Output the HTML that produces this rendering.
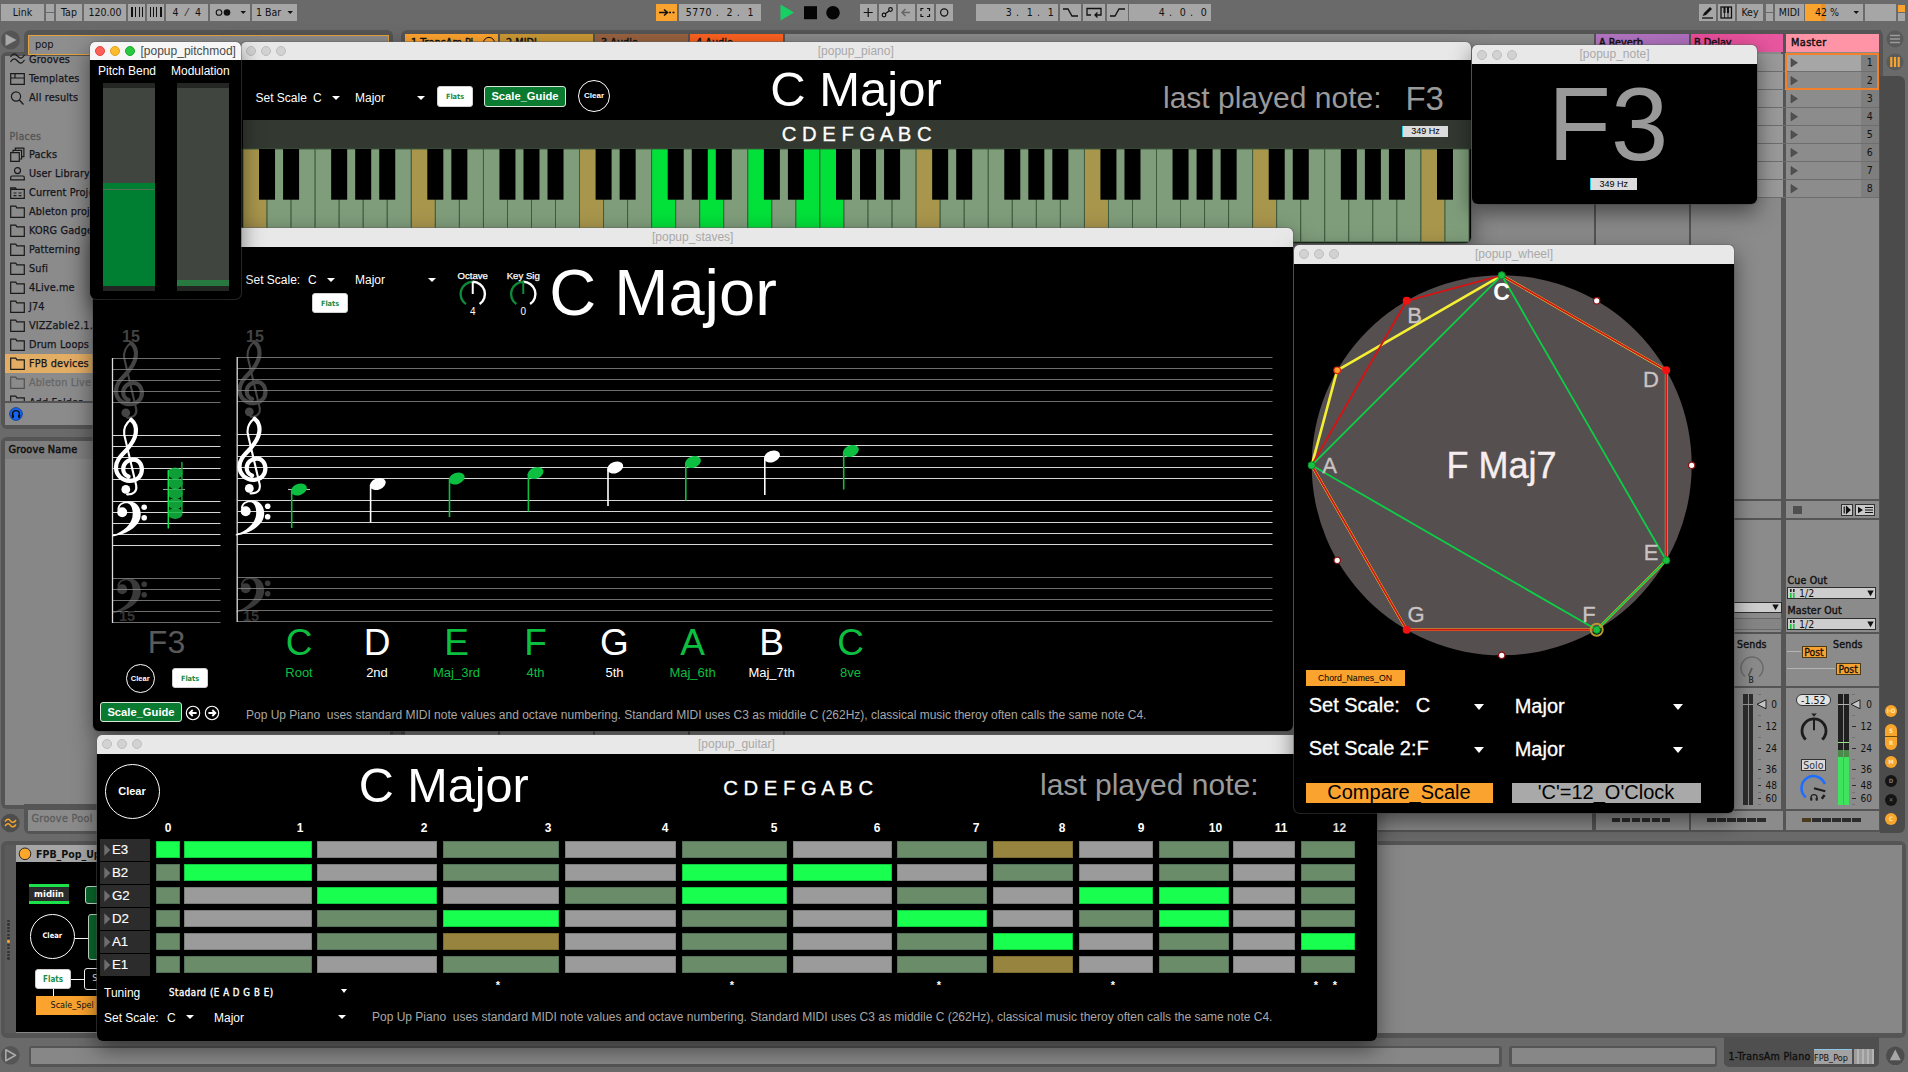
<!DOCTYPE html><html><head><meta charset="utf-8"><title>popup</title><style>
html,body{margin:0;padding:0;}
body{width:1908px;height:1072px;overflow:hidden;background:#6a6a6a;font-family:"Liberation Sans",sans-serif;position:relative;}
div,span{position:absolute;box-sizing:border-box;white-space:nowrap;}
svg{position:absolute;overflow:visible;}
.ab{font-family:"DejaVu Sans Condensed","DejaVu Sans","Liberation Sans",sans-serif;color:#111;}
.win{background:#000;border-radius:5px 5px 6px 6px;box-shadow:0 8px 22px rgba(0,0,0,.5),0 0 0 1px rgba(110,110,110,.45);overflow:hidden;}
.tb{left:0;top:0;right:0;background:#e8e8e8;color:#a9a9a9;font-size:12px;text-align:center;}
.tl{width:10px;height:10px;border-radius:50%;background:#d2d2d2;border:0.5px solid #bdbdbd;}
.w{color:#fff;}
.arr{width:0;height:0;border-left:4px solid transparent;border-right:4px solid transparent;border-top:4.5px solid #fff;}
.flats{background:#fff;border:1px solid #cfcfcf;border-radius:3px;color:#1c8a43;font-size:7.3px;font-weight:bold;text-align:center;font-family:"DejaVu Sans Condensed","DejaVu Sans",sans-serif;}
.sg{background:#0b7a31;border:1px solid #d8e8dc;border-radius:3px;color:#fff;font-weight:bold;font-size:11.2px;text-align:center;}
.clr{border:1px solid #fff;border-radius:50%;color:#fff;text-align:center;font-weight:bold;}
.hz{background:#dcdcdc;border-left:1.5px solid #2ec8e8;color:#000;font-size:9px;text-align:center;}
</style></head><body>
<div class="ab" style="left:1px;top:4px;width:43px;height:17px;background:#a6a6a6;text-align:center;line-height:17px;font-size:10.5px;">Link</div>
<div class="ab" style="left:46px;top:4px;width:8px;height:17px;background:#a6a6a6;text-align:center;line-height:17px;font-size:10.5px;"></div>
<div style="left:46px;top:12px;width:8px;height:1px;background:#6a6a6a;"></div>
<div class="ab" style="left:56px;top:4px;width:26px;height:17px;background:#a6a6a6;text-align:center;line-height:17px;font-size:10.5px;">Tap</div>
<div class="ab" style="left:84px;top:4px;width:42px;height:17px;background:#a6a6a6;text-align:center;line-height:17px;font-size:10.5px;">120.00</div>
<div class="ab" style="left:128px;top:4px;width:17px;height:17px;background:#a6a6a6;text-align:center;line-height:17px;font-size:10.5px;"></div>
<div class="ab" style="left:147px;top:4px;width:17px;height:17px;background:#a6a6a6;text-align:center;line-height:17px;font-size:10.5px;"></div>
<div style="left:131px;top:7px;width:2.2px;height:10px;background:#111;"></div>
<div style="left:135.4px;top:7px;width:1px;height:10px;background:#111;"></div>
<div style="left:138.6px;top:7px;width:1px;height:10px;background:#111;"></div>
<div style="left:141.79999999999998px;top:7px;width:1px;height:10px;background:#111;"></div>
<div style="left:150px;top:7px;width:1px;height:10px;background:#111;"></div>
<div style="left:153.2px;top:7px;width:1px;height:10px;background:#111;"></div>
<div style="left:156.39999999999998px;top:7px;width:1px;height:10px;background:#111;"></div>
<div style="left:159.59999999999997px;top:7px;width:2.2px;height:10px;background:#111;"></div>
<div class="ab" style="left:166px;top:4px;width:42px;height:17px;background:#a6a6a6;text-align:center;line-height:17px;font-size:10.5px;letter-spacing:0.5px;">4&nbsp; &#8260; &nbsp;4</div>
<div class="ab" style="left:210px;top:4px;width:40px;height:17px;background:#a6a6a6;text-align:center;line-height:17px;font-size:10.5px;"></div>
<div class="ab" style="left:252px;top:4px;width:45px;height:17px;background:#a6a6a6;text-align:center;line-height:17px;font-size:10.5px;">1 Bar&nbsp;&nbsp;&nbsp;&nbsp;</div>
<svg width="40" height="17" style="left:210px;top:4px"><circle cx="9" cy="8.5" r="2.8" fill="none" stroke="#111" stroke-width="1.1"/><circle cx="17" cy="8.5" r="3.3" fill="#111"/><path d="M30.5,7 L36,7 L33.2,10 Z" fill="#111"/></svg>
<svg width="10" height="17" style="left:286px;top:4px"><path d="M1.5,7 L7,7 L4.2,10 Z" fill="#111"/></svg>
<div class="ab" style="left:656px;top:4px;width:21px;height:17px;background:#fba32f;text-align:center;line-height:17px;font-size:10.5px;"></div>
<svg width="21" height="17" style="left:656px;top:4px"><path d="M3,8.5 L11,8.5 M8,5.5 L11.5,8.5 L8,11.5" fill="none" stroke="#111" stroke-width="1.6"/><path d="M13,8.5 h2 M16.5,8.5 h2" stroke="#111" stroke-width="1.6"/></svg>
<div class="ab" style="left:679px;top:4px;width:82px;height:17px;background:#a6a6a6;text-align:center;line-height:17px;font-size:10.5px;letter-spacing:0.6px;">5770 .&nbsp; 2 .&nbsp; 1</div>
<svg width="70" height="21" style="left:778px;top:2px"><path d="M2.5,2.5 L16,10.5 L2.5,18.5 Z" fill="#17d064"/><rect x="26" y="4.2" width="13" height="13" fill="#050505"/><circle cx="55" cy="10.7" r="6.8" fill="#050505"/></svg>
<div class="ab" style="left:860px;top:4px;width:16.5px;height:17px;background:#a6a6a6;text-align:center;line-height:17px;font-size:10.5px;"></div>
<div class="ab" style="left:879px;top:4px;width:16.5px;height:17px;background:#a6a6a6;text-align:center;line-height:17px;font-size:10.5px;"></div>
<div class="ab" style="left:898px;top:4px;width:16.5px;height:17px;background:#a6a6a6;text-align:center;line-height:17px;font-size:10.5px;"></div>
<div class="ab" style="left:917px;top:4px;width:16.5px;height:17px;background:#a6a6a6;text-align:center;line-height:17px;font-size:10.5px;"></div>
<div class="ab" style="left:936px;top:4px;width:16.5px;height:17px;background:#a6a6a6;text-align:center;line-height:17px;font-size:10.5px;"></div>
<svg width="100" height="17" style="left:860px;top:4px" fill="none" stroke="#111" stroke-width="1.2"><path d="M8.2,4 V13 M3.7,8.5 H12.7"/><circle cx="24" cy="11" r="1.8"/><circle cx="30.5" cy="5.5" r="1.8"/><path d="M25.3,9.8 L29.2,6.7"/><path d="M42,8.5 H50 M45.5,5 L42,8.5 L45.5,12" stroke="#666" stroke-width="1.5"/><path d="M61,7 V4.5 H63.5 M67,4.5 H69.5 V7 M69.5,10 V12.5 H67 M63.5,12.5 H61 V10"/><circle cx="84.2" cy="8.5" r="3.6"/></svg>
<div class="ab" style="left:976px;top:4px;width:82px;height:17px;background:#a6a6a6;text-align:center;line-height:17px;font-size:10.5px;letter-spacing:0.6px;text-align:right;">3 .&nbsp; 1 .&nbsp; 1&nbsp;</div>
<div class="ab" style="left:1060px;top:4px;width:21px;height:17px;background:#a6a6a6;text-align:center;line-height:17px;font-size:10.5px;"></div>
<div class="ab" style="left:1083px;top:4px;width:21.5px;height:17px;background:#a6a6a6;text-align:center;line-height:17px;font-size:10.5px;"></div>
<div class="ab" style="left:1107px;top:4px;width:20.5px;height:17px;background:#a6a6a6;text-align:center;line-height:17px;font-size:10.5px;"></div>
<svg width="70" height="17" style="left:1060px;top:4px" fill="none" stroke="#111" stroke-width="1.3"><path d="M3,5 H8 L12,12 H18"/><path d="M31,11 H27 V4.5 H41 V11 H35 M37.5,8.5 L35,11 L37.5,13.5"/><path d="M50,12 H55 L59,5 H65"/></svg>
<div class="ab" style="left:1129px;top:4px;width:82px;height:17px;background:#a6a6a6;text-align:center;line-height:17px;font-size:10.5px;letter-spacing:0.6px;text-align:right;">4 .&nbsp; 0 .&nbsp; 0&nbsp;</div>
<div class="ab" style="left:1699px;top:4px;width:16.5px;height:17px;background:#a6a6a6;text-align:center;line-height:17px;font-size:10.5px;"></div>
<div class="ab" style="left:1718px;top:4px;width:17px;height:17px;background:#a6a6a6;text-align:center;line-height:17px;font-size:10.5px;"></div>
<div class="ab" style="left:1737px;top:4px;width:26px;height:17px;background:#a6a6a6;text-align:center;line-height:17px;font-size:10.5px;">Key</div>
<div class="ab" style="left:1765.5px;top:4px;width:7.5px;height:17px;background:#a6a6a6;text-align:center;line-height:17px;font-size:10.5px;"></div>
<div style="left:1765.5px;top:12px;width:7.5px;height:1px;background:#6a6a6a;"></div>
<div class="ab" style="left:1775px;top:4px;width:28.5px;height:17px;background:#a6a6a6;text-align:center;line-height:17px;font-size:10.5px;">MIDI</div>
<div class="ab" style="left:1805px;top:4px;width:58px;height:17px;background:#a6a6a6;text-align:center;line-height:17px;font-size:10.5px;"></div>
<div style="left:1805px;top:4px;width:20px;height:17px;background:#fba32f;"></div>
<div style="left:1821px;top:4px;width:4px;height:17px;background:#e8902a;"></div>
<span class="ab" style="left:1815px;top:6px;font-size:10.5px;line-height:12.5px;color:#111;">42 %</span>
<svg width="10" height="17" style="left:1852px;top:4px"><path d="M1.5,7 L7,7 L4.2,10 Z" fill="#111"/></svg>
<div class="ab" style="left:1865px;top:4px;width:30.5px;height:17px;background:#a6a6a6;text-align:center;line-height:17px;font-size:10.5px;"></div>
<div style="left:1897.5px;top:5px;width:7.5px;height:6.5px;background:#fba32f;"></div>
<div style="left:1897.5px;top:13px;width:7.5px;height:8px;background:#a6a6a6;"></div>
<svg width="40" height="17" style="left:1699px;top:4px"><path d="M3.5,12 L5,9 L11,3 L13,5 L7,11 Z" fill="#111"/><path d="M3,14 H14" stroke="#111" stroke-width="1.3"/><rect x="22" y="3" width="10.5" height="11" fill="none" stroke="#111" stroke-width="1.3"/><path d="M25.5,3 V9 M29,3 V9" stroke="#111" stroke-width="2"/><path d="M25.5,9 V14 M29,9 V14" stroke="#111" stroke-width="0.8"/></svg>
<div style="left:24px;top:30px;width:369px;height:30px;background:#555;border-radius:6px 6px 0 0;"></div>
<div style="left:1px;top:52px;width:392px;height:377px;background:#555;border-radius:6px;"></div>
<div style="left:5px;top:56px;width:385px;height:345px;background:#8b8b8b;"></div>
<div style="left:5px;top:402.5px;width:385px;height:22px;background:#8b8b8b;"></div>
<svg width="22" height="22" style="left:0px;top:30px"><circle cx="10.5" cy="10" r="9.5" fill="#555"/><path d="M5.5,4 L16.5,10 L5.5,16 Z" fill="#a8a8a8"/></svg>
<div style="left:28px;top:34.5px;width:361px;height:20px;background:#8e8e8e;border:1.5px solid #e5a340;"></div>
<span class="ab" style="left:35px;top:38px;font-size:11px;line-height:13px;color:#111;">pop</span>
<div style="left:5px;top:354px;width:385px;height:19px;background:#e3ad64;"></div>
<span class="ab" style="left:9.5px;top:129.5px;font-size:10.5px;line-height:12.5px;color:#555;-webkit-text-stroke:0.35px #555;letter-spacing:0.3px;">Places</span>
<svg width="15" height="15" style="left:10px;top:51.5px;opacity:1"><path d="M0.5,5 C3,1 5,1 7.5,4 C10,7 12,7 14.5,3 M0.5,10 C3,6 5,6 7.5,9 C10,12 12,12 14.5,8" fill="none" stroke="#1a1a1a" stroke-width="1.2"/></svg>
<span class="ab" style="left:29px;top:54.0px;font-size:10.8px;line-height:12.8px;color:#15151c;letter-spacing:0.15px;-webkit-text-stroke:0.25px #15151c;">Grooves</span>
<svg width="15" height="15" style="left:10px;top:70.5px;opacity:1"><path d="M0.7,2.7 H14.3 V13.3 H0.7 Z M0.7,7 H14.3 M5,2.7 V7" fill="none" stroke="#1a1a1a" stroke-width="1.2"/></svg>
<span class="ab" style="left:29px;top:73.0px;font-size:10.8px;line-height:12.8px;color:#15151c;letter-spacing:0.15px;-webkit-text-stroke:0.25px #15151c;">Templates</span>
<svg width="15" height="15" style="left:10px;top:89.5px;opacity:1"><circle cx="6" cy="6.5" r="4.6" fill="none" stroke="#1a1a1a" stroke-width="1.2"/><path d="M9.3,10 L13.5,14.5" stroke="#1a1a1a" stroke-width="1.3"/></svg>
<span class="ab" style="left:29px;top:92.0px;font-size:10.8px;line-height:12.8px;color:#15151c;letter-spacing:0.15px;-webkit-text-stroke:0.25px #15151c;">All results</span>
<svg width="15" height="15" style="left:10px;top:146.5px;opacity:1"><path d="M0.7,5.7 H9.3 V14.3 H0.7 Z M3,5.5 V3.4 H11.6 V12 H9.5 M5.3,3.2 V1.1 H13.9 V9.7 H11.8" fill="none" stroke="#1a1a1a" stroke-width="1.2"/></svg>
<span class="ab" style="left:29px;top:149.0px;font-size:10.8px;line-height:12.8px;color:#15151c;letter-spacing:0.15px;-webkit-text-stroke:0.25px #15151c;">Packs</span>
<svg width="15" height="15" style="left:10px;top:165.5px;opacity:1"><circle cx="7.5" cy="4.6" r="3" fill="none" stroke="#1a1a1a" stroke-width="1.2"/><path d="M0.7,13.8 V11.5 Q0.7,10 2.2,10 H12.8 Q14.3,10 14.3,11.5 V13.8 Z" fill="none" stroke="#1a1a1a" stroke-width="1.2"/></svg>
<span class="ab" style="left:29px;top:168.0px;font-size:10.8px;line-height:12.8px;color:#15151c;letter-spacing:0.15px;-webkit-text-stroke:0.25px #15151c;">User Library</span>
<svg width="15" height="15" style="left:10px;top:184.5px;opacity:1"><path d="M0.7,2.8 H5.5 L6.5,4.4 H14.3 V13.3 H0.7 Z M0.7,4.4 H6.5 M3.5,8 H6.5 M8.5,8 H11.5 M3.5,10.7 H6.5 M8.5,10.7 H11.5" fill="none" stroke="#1a1a1a" stroke-width="1.2"/></svg>
<span class="ab" style="left:29px;top:187.0px;font-size:10.8px;line-height:12.8px;color:#15151c;letter-spacing:0.15px;-webkit-text-stroke:0.25px #15151c;">Current Project</span>
<svg width="15" height="15" style="left:10px;top:203.5px;opacity:1"><path d="M0.7,13.4 V2.2 H5.8 L6.8,3.8 H14.3 V13.4 Z" fill="none" stroke="#1a1a1a" stroke-width="1.2"/></svg>
<span class="ab" style="left:29px;top:206.0px;font-size:10.8px;line-height:12.8px;color:#15151c;letter-spacing:0.15px;-webkit-text-stroke:0.25px #15151c;">Ableton projects</span>
<svg width="15" height="15" style="left:10px;top:222.5px;opacity:1"><path d="M0.7,13.4 V2.2 H5.8 L6.8,3.8 H14.3 V13.4 Z" fill="none" stroke="#1a1a1a" stroke-width="1.2"/></svg>
<span class="ab" style="left:29px;top:225.0px;font-size:10.8px;line-height:12.8px;color:#15151c;letter-spacing:0.15px;-webkit-text-stroke:0.25px #15151c;">KORG Gadget</span>
<svg width="15" height="15" style="left:10px;top:241.5px;opacity:1"><path d="M0.7,13.4 V2.2 H5.8 L6.8,3.8 H14.3 V13.4 Z" fill="none" stroke="#1a1a1a" stroke-width="1.2"/></svg>
<span class="ab" style="left:29px;top:244.0px;font-size:10.8px;line-height:12.8px;color:#15151c;letter-spacing:0.15px;-webkit-text-stroke:0.25px #15151c;">Patterning</span>
<svg width="15" height="15" style="left:10px;top:260.5px;opacity:1"><path d="M0.7,13.4 V2.2 H5.8 L6.8,3.8 H14.3 V13.4 Z" fill="none" stroke="#1a1a1a" stroke-width="1.2"/></svg>
<span class="ab" style="left:29px;top:263.0px;font-size:10.8px;line-height:12.8px;color:#15151c;letter-spacing:0.15px;-webkit-text-stroke:0.25px #15151c;">Sufi</span>
<svg width="15" height="15" style="left:10px;top:279.5px;opacity:1"><path d="M0.7,13.4 V2.2 H5.8 L6.8,3.8 H14.3 V13.4 Z" fill="none" stroke="#1a1a1a" stroke-width="1.2"/></svg>
<span class="ab" style="left:29px;top:282.0px;font-size:10.8px;line-height:12.8px;color:#15151c;letter-spacing:0.15px;-webkit-text-stroke:0.25px #15151c;">4Live.me</span>
<svg width="15" height="15" style="left:10px;top:298.5px;opacity:1"><path d="M0.7,13.4 V2.2 H5.8 L6.8,3.8 H14.3 V13.4 Z" fill="none" stroke="#1a1a1a" stroke-width="1.2"/></svg>
<span class="ab" style="left:29px;top:301.0px;font-size:10.8px;line-height:12.8px;color:#15151c;letter-spacing:0.15px;-webkit-text-stroke:0.25px #15151c;">J74</span>
<svg width="15" height="15" style="left:10px;top:317.5px;opacity:1"><path d="M0.7,13.4 V2.2 H5.8 L6.8,3.8 H14.3 V13.4 Z" fill="none" stroke="#1a1a1a" stroke-width="1.2"/></svg>
<span class="ab" style="left:29px;top:320.0px;font-size:10.8px;line-height:12.8px;color:#15151c;letter-spacing:0.15px;-webkit-text-stroke:0.25px #15151c;">VIZZable2.1.1</span>
<svg width="15" height="15" style="left:10px;top:336.5px;opacity:1"><path d="M0.7,13.4 V2.2 H5.8 L6.8,3.8 H14.3 V13.4 Z" fill="none" stroke="#1a1a1a" stroke-width="1.2"/></svg>
<span class="ab" style="left:29px;top:339.0px;font-size:10.8px;line-height:12.8px;color:#15151c;letter-spacing:0.15px;-webkit-text-stroke:0.25px #15151c;">Drum Loops</span>
<svg width="15" height="15" style="left:10px;top:355.5px;opacity:1"><path d="M0.7,13.4 V2.2 H5.8 L6.8,3.8 H14.3 V13.4 Z" fill="none" stroke="#1a1a1a" stroke-width="1.2"/></svg>
<span class="ab" style="left:29px;top:358.0px;font-size:10.8px;line-height:12.8px;color:#15151c;letter-spacing:0.15px;-webkit-text-stroke:0.25px #15151c;">FPB devices</span>
<svg width="15" height="15" style="left:10px;top:374.5px;opacity:0.5"><path d="M0.7,13.4 V2.2 H5.8 L6.8,3.8 H14.3 V13.4 Z" fill="none" stroke="#1a1a1a" stroke-width="1.2"/></svg>
<span class="ab" style="left:29px;top:377.0px;font-size:10.8px;line-height:12.8px;color:#666;letter-spacing:0.15px;-webkit-text-stroke:0.25px #666;">Ableton Live suite</span>
<div style="left:5px;top:392px;width:385px;height:9px;overflow:hidden;"><svg width="15" height="15" style="left:5px;top:1.5px"><path d="M0.7,13.4 V2.2 H5.8 L6.8,3.8 H14.3 V13.4 Z" fill="none" stroke="#1a1a1a" stroke-width="1.2"/></svg><span class="ab" style="left:24px;top:3.5px;font-size:10.8px;line-height:13px;color:#15151c;letter-spacing:0.15px;-webkit-text-stroke:0.25px #15151c;">Add Folder</span></div>
<div style="left:5px;top:401px;width:385px;height:1.5px;background:#555;"></div>
<svg width="14" height="14" style="left:8.5px;top:406.5px"><circle cx="7" cy="7" r="6.3" fill="#1466f0" stroke="#0c3f9a" stroke-width="1"/><path d="M3.6,8.5 V7 A3.4,3.4 0 0 1 10.4,7 V8.5" fill="none" stroke="#0a0a14" stroke-width="1.4"/><rect x="2.8" y="7.6" width="2.2" height="3.4" rx="0.8" fill="#0a0a14"/><rect x="9" y="7.6" width="2.2" height="3.4" rx="0.8" fill="#0a0a14"/></svg>
<div style="left:1px;top:436.5px;width:392px;height:372px;background:#555;border-radius:6px;"></div>
<div style="left:5px;top:440.5px;width:385px;height:18.5px;background:#7e7e7e;"></div>
<div style="left:5px;top:459px;width:385px;height:346px;background:#878787;"></div>
<span class="ab" style="left:8.5px;top:443.5px;font-size:10.8px;line-height:12.8px;color:#111;-webkit-text-stroke:0.5px #111;letter-spacing:0.2px;">Groove Name</span>
<div style="left:24px;top:804px;width:369px;height:30px;background:#555;border-radius:0 0 6px 6px;"></div>
<div style="left:27.5px;top:809.5px;width:362px;height:21px;background:#8b8b8b;"></div>
<span class="ab" style="left:31.5px;top:812.5px;font-size:10.8px;line-height:12.8px;color:#5c5c5c;letter-spacing:0.3px;-webkit-text-stroke:0.3px #5c5c5c;">Groove Pool</span>
<svg width="22" height="22" style="left:0px;top:812px"><circle cx="10.3" cy="11" r="9.3" fill="#4d4d4d"/><path d="M5,9.5 C7,6.5 9,6.5 10.5,8.8 C12,11 14,11 16,8 M5,14 C7,11 9,11 10.5,13.3 C12,15.5 14,15.5 16,12.5" fill="none" stroke="#f7a52c" stroke-width="1.5"/></svg>
<div style="left:401px;top:30px;width:1480px;height:802px;background:#555;border-radius:6px 0 0 6px;"></div>
<div style="left:1876px;top:30px;width:7px;height:802px;background:#555;border-radius:0 6px 0 0;"></div>
<div style="left:404.5px;top:34px;width:1376.5px;height:775px;background:#8b8b8b;"></div>
<div style="left:1785.5px;top:34px;width:93px;height:775px;background:#8b8b8b;"></div>
<div style="left:1377px;top:811px;width:215px;height:19px;background:#8b8b8b;"></div>
<div style="left:1595.5px;top:811px;width:93px;height:19px;background:#8b8b8b;"></div>
<div style="left:1690.5px;top:811px;width:93px;height:19px;background:#8b8b8b;"></div>
<div style="left:1785.5px;top:811px;width:93px;height:19px;background:#8b8b8b;"></div>
<div style="left:405px;top:34px;width:93px;height:17.5px;background:#ffa52f;"></div>
<span class="ab" style="left:411px;top:36.5px;font-size:10.8px;line-height:12.8px;color:#111;-webkit-text-stroke:0.45px #111;">1 TransAm Pi</span>
<div style="left:500px;top:34px;width:93px;height:17.5px;background:#cd9b36;"></div>
<span class="ab" style="left:506px;top:36.5px;font-size:10.8px;line-height:12.8px;color:#111;-webkit-text-stroke:0.45px #111;">2 MIDI</span>
<div style="left:595px;top:34px;width:93px;height:17.5px;background:#9a6340;"></div>
<span class="ab" style="left:601px;top:36.5px;font-size:10.8px;line-height:12.8px;color:#111;-webkit-text-stroke:0.45px #111;">3 Audio</span>
<div style="left:690px;top:34px;width:93px;height:17.5px;background:#ff6320;"></div>
<span class="ab" style="left:696px;top:36.5px;font-size:10.8px;line-height:12.8px;color:#111;-webkit-text-stroke:0.45px #111;">4 Audio</span>
<svg width="14" height="14" style="left:482px;top:35.5px"><circle cx="7" cy="7" r="5.6" fill="none" stroke="#111" stroke-width="1"/></svg>
<div style="left:498px;top:34px;width:2px;height:775px;background:#555;"></div>
<div style="left:593px;top:34px;width:2px;height:775px;background:#555;"></div>
<div style="left:688px;top:34px;width:2px;height:775px;background:#555;"></div>
<div style="left:783px;top:34px;width:2px;height:775px;background:#555;"></div>
<div style="left:1593.5px;top:34px;width:2px;height:775px;background:#555;"></div>
<div style="left:1688.5px;top:34px;width:2px;height:775px;background:#555;"></div>
<div style="left:1783px;top:34px;width:2.5px;height:798px;background:#555;"></div>
<div style="left:1595.5px;top:34px;width:93px;height:17.5px;background:linear-gradient(90deg,#b576c4,#ae6fbd);"></div>
<span class="ab" style="left:1599px;top:36.5px;font-size:10.8px;line-height:12.8px;color:#111;-webkit-text-stroke:0.45px #111;">A Reverb</span>
<div style="left:1690.5px;top:34px;width:92.5px;height:17.5px;background:linear-gradient(90deg,#ec4b9b,#e6589f);"></div>
<span class="ab" style="left:1694px;top:36.5px;font-size:10.8px;line-height:12.8px;color:#111;-webkit-text-stroke:0.45px #111;">B Delay</span>
<div style="left:1785.5px;top:34px;width:93px;height:17.5px;background:#ff94a6;"></div>
<span class="ab" style="left:1791px;top:36.5px;font-size:10.8px;line-height:12.8px;color:#111;-webkit-text-stroke:0.45px #111;letter-spacing:0.4px;">Master</span>
<div style="left:1878.5px;top:34px;width:2.5px;height:798px;background:#555;"></div>
<div style="left:1595.5px;top:54px;width:93.0px;height:16.5px;background:#9a9a9a;"></div>
<div style="left:1690.5px;top:54px;width:92.5px;height:16.5px;background:#9a9a9a;"></div>
<div style="left:1785.5px;top:54px;width:75.5px;height:16.5px;background:#a6a6a6;"></div>
<div class="ab" style="left:1861px;top:54px;width:17.5px;height:16.5px;background:#7e7e7e;text-align:center;line-height:16.5px;font-size:10.5px;">1</div>
<svg width="10" height="12" style="left:1790px;top:56.5px"><path d="M1,1.5 L7.5,5.7 L1,9.9 Z" fill="#505050" stroke="#444" stroke-width="0.6"/></svg>
<div style="left:1595.5px;top:70.5px;width:283px;height:1.5px;background:#6e6e6e;"></div>
<div style="left:1595.5px;top:72px;width:93.0px;height:16.5px;background:#9a9a9a;"></div>
<div style="left:1690.5px;top:72px;width:92.5px;height:16.5px;background:#9a9a9a;"></div>
<div style="left:1785.5px;top:72px;width:75.5px;height:16.5px;background:#8c8c8c;"></div>
<div class="ab" style="left:1861px;top:72px;width:17.5px;height:16.5px;background:#7e7e7e;text-align:center;line-height:16.5px;font-size:10.5px;">2</div>
<svg width="10" height="12" style="left:1790px;top:74.5px"><path d="M1,1.5 L7.5,5.7 L1,9.9 Z" fill="#505050" stroke="#444" stroke-width="0.6"/></svg>
<div style="left:1595.5px;top:88.5px;width:283px;height:1.5px;background:#6e6e6e;"></div>
<div style="left:1595.5px;top:90px;width:93.0px;height:16.5px;background:#9a9a9a;"></div>
<div style="left:1690.5px;top:90px;width:92.5px;height:16.5px;background:#9a9a9a;"></div>
<div style="left:1785.5px;top:90px;width:75.5px;height:16.5px;background:#8c8c8c;"></div>
<div class="ab" style="left:1861px;top:90px;width:17.5px;height:16.5px;background:#7e7e7e;text-align:center;line-height:16.5px;font-size:10.5px;">3</div>
<svg width="10" height="12" style="left:1790px;top:92.5px"><path d="M1,1.5 L7.5,5.7 L1,9.9 Z" fill="#505050" stroke="#444" stroke-width="0.6"/></svg>
<div style="left:1595.5px;top:106.5px;width:283px;height:1.5px;background:#6e6e6e;"></div>
<div style="left:1595.5px;top:108px;width:93.0px;height:16.5px;background:#9a9a9a;"></div>
<div style="left:1690.5px;top:108px;width:92.5px;height:16.5px;background:#9a9a9a;"></div>
<div style="left:1785.5px;top:108px;width:75.5px;height:16.5px;background:#8c8c8c;"></div>
<div class="ab" style="left:1861px;top:108px;width:17.5px;height:16.5px;background:#7e7e7e;text-align:center;line-height:16.5px;font-size:10.5px;">4</div>
<svg width="10" height="12" style="left:1790px;top:110.5px"><path d="M1,1.5 L7.5,5.7 L1,9.9 Z" fill="#505050" stroke="#444" stroke-width="0.6"/></svg>
<div style="left:1595.5px;top:124.5px;width:283px;height:1.5px;background:#6e6e6e;"></div>
<div style="left:1595.5px;top:126px;width:93.0px;height:16.5px;background:#9a9a9a;"></div>
<div style="left:1690.5px;top:126px;width:92.5px;height:16.5px;background:#9a9a9a;"></div>
<div style="left:1785.5px;top:126px;width:75.5px;height:16.5px;background:#8c8c8c;"></div>
<div class="ab" style="left:1861px;top:126px;width:17.5px;height:16.5px;background:#7e7e7e;text-align:center;line-height:16.5px;font-size:10.5px;">5</div>
<svg width="10" height="12" style="left:1790px;top:128.5px"><path d="M1,1.5 L7.5,5.7 L1,9.9 Z" fill="#505050" stroke="#444" stroke-width="0.6"/></svg>
<div style="left:1595.5px;top:142.5px;width:283px;height:1.5px;background:#6e6e6e;"></div>
<div style="left:1595.5px;top:144px;width:93.0px;height:16.5px;background:#9a9a9a;"></div>
<div style="left:1690.5px;top:144px;width:92.5px;height:16.5px;background:#9a9a9a;"></div>
<div style="left:1785.5px;top:144px;width:75.5px;height:16.5px;background:#8c8c8c;"></div>
<div class="ab" style="left:1861px;top:144px;width:17.5px;height:16.5px;background:#7e7e7e;text-align:center;line-height:16.5px;font-size:10.5px;">6</div>
<svg width="10" height="12" style="left:1790px;top:146.5px"><path d="M1,1.5 L7.5,5.7 L1,9.9 Z" fill="#505050" stroke="#444" stroke-width="0.6"/></svg>
<div style="left:1595.5px;top:160.5px;width:283px;height:1.5px;background:#6e6e6e;"></div>
<div style="left:1595.5px;top:162px;width:93.0px;height:16.5px;background:#9a9a9a;"></div>
<div style="left:1690.5px;top:162px;width:92.5px;height:16.5px;background:#9a9a9a;"></div>
<div style="left:1785.5px;top:162px;width:75.5px;height:16.5px;background:#8c8c8c;"></div>
<div class="ab" style="left:1861px;top:162px;width:17.5px;height:16.5px;background:#7e7e7e;text-align:center;line-height:16.5px;font-size:10.5px;">7</div>
<svg width="10" height="12" style="left:1790px;top:164.5px"><path d="M1,1.5 L7.5,5.7 L1,9.9 Z" fill="#505050" stroke="#444" stroke-width="0.6"/></svg>
<div style="left:1595.5px;top:178.5px;width:283px;height:1.5px;background:#6e6e6e;"></div>
<div style="left:1595.5px;top:180px;width:93.0px;height:16.5px;background:#9a9a9a;"></div>
<div style="left:1690.5px;top:180px;width:92.5px;height:16.5px;background:#9a9a9a;"></div>
<div style="left:1785.5px;top:180px;width:75.5px;height:16.5px;background:#8c8c8c;"></div>
<div class="ab" style="left:1861px;top:180px;width:17.5px;height:16.5px;background:#7e7e7e;text-align:center;line-height:16.5px;font-size:10.5px;">8</div>
<svg width="10" height="12" style="left:1790px;top:182.5px"><path d="M1,1.5 L7.5,5.7 L1,9.9 Z" fill="#505050" stroke="#444" stroke-width="0.6"/></svg>
<div style="left:1595.5px;top:196.5px;width:283px;height:1.5px;background:#6e6e6e;"></div>
<div style="left:1784.5px;top:52.5px;width:94.5px;height:37px;border:2px solid #f0812a;background:transparent;"></div>
<div style="left:1377px;top:499px;width:502px;height:2.3px;background:#555;"></div>
<div style="left:1377px;top:517.5px;width:502px;height:2.3px;background:#555;"></div>
<div style="left:1793px;top:505.5px;width:8.5px;height:8.5px;background:#4f4f4f;"></div>
<div style="left:1840.5px;top:503.5px;width:12px;height:12px;background:#c9c9c9;border:1px solid #333;"></div>
<div style="left:1855px;top:503.5px;width:19.5px;height:12px;background:#c9c9c9;border:1px solid #333;"></div>
<svg width="40" height="12" style="left:1840.5px;top:503.5px"><path d="M3.2,2.5 V9.5 M5.5,2.8 L9,6 L5.5,9.2 Z" stroke="#111" stroke-width="1.2" fill="#111"/><path d="M17,2.8 L22,6 L17,9.2 Z" fill="#111"/><path d="M24,3.5 H32 M24,6 H32 M24,8.5 H32" stroke="#111" stroke-width="1.1"/></svg>
<span class="ab" style="left:1787.5px;top:573.5px;font-size:10.5px;line-height:12.5px;color:#111;-webkit-text-stroke:0.4px #111;letter-spacing:0.2px;">Cue Out</span>
<span class="ab" style="left:1787.5px;top:604px;font-size:10.5px;line-height:12.5px;color:#111;-webkit-text-stroke:0.4px #111;letter-spacing:0.2px;">Master Out</span>
<div style="left:1787px;top:587px;width:89px;height:11.5px;background:#cdcdcd;border:1px solid #2e2e2e;"></div>
<svg width="8" height="10" style="left:1789.5px;top:588.5px"><rect x="0" y="0" width="1.6" height="3" fill="#222"/><rect x="3" y="0" width="1.6" height="3" fill="#222"/><rect x="0" y="4" width="1.6" height="5" fill="#19c840"/><rect x="3" y="4" width="1.6" height="5" fill="#19c840"/></svg>
<span class="ab" style="left:1799px;top:586.5px;font-size:10.5px;line-height:12.5px;color:#111;">1/2</span>
<svg width="8" height="8" style="left:1866.5px;top:589.75px"><path d="M0.3,0.5 H6.7 L3.5,6.2 Z" fill="#111"/></svg>
<div style="left:1787px;top:618px;width:89px;height:11.5px;background:#cdcdcd;border:1px solid #2e2e2e;"></div>
<svg width="8" height="10" style="left:1789.5px;top:619.5px"><rect x="0" y="0" width="1.6" height="3" fill="#222"/><rect x="3" y="0" width="1.6" height="3" fill="#222"/><rect x="0" y="4" width="1.6" height="5" fill="#19c840"/><rect x="3" y="4" width="1.6" height="5" fill="#19c840"/></svg>
<span class="ab" style="left:1799px;top:617.5px;font-size:10.5px;line-height:12.5px;color:#111;">1/2</span>
<svg width="8" height="8" style="left:1866.5px;top:620.75px"><path d="M0.3,0.5 H6.7 L3.5,6.2 Z" fill="#111"/></svg>
<div style="left:1690.5px;top:601.5px;width:91px;height:11.5px;background:#cdcdcd;border:1px solid #2e2e2e;"></div>
<svg width="8" height="8" style="left:1772.0px;top:604.25px"><path d="M0.3,0.5 H6.7 L3.5,6.2 Z" fill="#111"/></svg>
<div style="left:1690.5px;top:618px;width:91px;height:11.5px;background:#858585;border:1px solid #6a6a6a;"></div>
<div style="left:1377px;top:631.7px;width:502px;height:2.3px;background:#555;"></div>
<div style="left:1377px;top:686px;width:502px;height:2.3px;background:#555;"></div>
<span class="ab" style="left:1737px;top:637.5px;font-size:10.5px;line-height:12.5px;color:#111;-webkit-text-stroke:0.4px #111;letter-spacing:0.2px;">Sends</span>
<svg width="30" height="34" style="left:1737.5px;top:652.5px"><path d="M7,23.5 A11,11 0 1 1 21,23.5" fill="none" stroke="#6b6b6b" stroke-width="1.6"/><path d="M14,15 L10.5,23" stroke="#5a5a5a" stroke-width="1.8"/></svg>
<span class="ab" style="left:1748.5px;top:674.5px;font-size:8.5px;line-height:10.5px;color:#111;">B</span>
<span class="ab" style="left:1833px;top:637.5px;font-size:10.5px;line-height:12.5px;color:#111;-webkit-text-stroke:0.4px #111;letter-spacing:0.2px;">Sends</span>
<div style="left:1787px;top:651px;width:14px;height:1px;background:#b4b4b4;"></div>
<div style="left:1787px;top:668.3px;width:48px;height:1px;background:#b4b4b4;"></div>
<div class="ab" style="left:1801.5px;top:646px;width:25px;height:11.8px;background:#fba32f;border:1px solid #4a3a1a;text-align:center;line-height:10px;font-size:10.3px;-webkit-text-stroke:0.3px #111;">Post</div>
<div class="ab" style="left:1835.5px;top:663px;width:25.3px;height:11.8px;background:#fba32f;border:1px solid #4a3a1a;text-align:center;line-height:10px;font-size:10.3px;-webkit-text-stroke:0.3px #111;">Post</div>
<div style="left:1743px;top:693.5px;width:4.7px;height:111.5px;background:#2d2d2d;"></div>
<div style="left:1748.7px;top:693.5px;width:4.7px;height:111.5px;background:#2d2d2d;"></div>
<span class="ab" style="left:1755px;top:697.5px;width:22px;text-align:right;font-size:10px;line-height:13px;color:#111;">0</span>
<span class="ab" style="left:1755px;top:720.3px;width:22px;text-align:right;font-size:10px;line-height:13px;color:#111;">12</span>
<span class="ab" style="left:1755px;top:742.1px;width:22px;text-align:right;font-size:10px;line-height:13px;color:#111;">24</span>
<span class="ab" style="left:1755px;top:763.0px;width:22px;text-align:right;font-size:10px;line-height:13px;color:#111;">36</span>
<span class="ab" style="left:1755px;top:779.1px;width:22px;text-align:right;font-size:10px;line-height:13px;color:#111;">48</span>
<span class="ab" style="left:1755px;top:791.8px;width:22px;text-align:right;font-size:10px;line-height:13px;color:#111;">60</span>
<div style="left:1757.5px;top:693.5px;width:3px;height:1px;background:#727272;"></div>
<div style="left:1757.5px;top:703.5px;width:3.5px;height:1px;background:#2a2a2a;"></div>
<div style="left:1757.5px;top:714.5px;width:3px;height:1px;background:#727272;"></div>
<div style="left:1757.5px;top:726.3px;width:3.5px;height:1px;background:#2a2a2a;"></div>
<div style="left:1757.5px;top:736.5px;width:3px;height:1px;background:#727272;"></div>
<div style="left:1757.5px;top:748.1px;width:3.5px;height:1px;background:#2a2a2a;"></div>
<div style="left:1757.5px;top:758.5px;width:3px;height:1px;background:#727272;"></div>
<div style="left:1757.5px;top:769.0px;width:3.5px;height:1px;background:#2a2a2a;"></div>
<div style="left:1757.5px;top:777.5px;width:3px;height:1px;background:#727272;"></div>
<div style="left:1757.5px;top:785.1px;width:3.5px;height:1px;background:#2a2a2a;"></div>
<div style="left:1757.5px;top:791.5px;width:3px;height:1px;background:#727272;"></div>
<div style="left:1757.5px;top:797.8px;width:3.5px;height:1px;background:#2a2a2a;"></div>
<div style="left:1757.5px;top:803.5px;width:3px;height:1px;background:#727272;"></div>
<svg width="12" height="12" style="left:1755.5px;top:699px"><path d="M10,0.8 V9.8 L1,5.3 Z" fill="#c4c4c4" stroke="#222" stroke-width="1"/></svg>
<div style="left:1838px;top:693.5px;width:4.8px;height:111.5px;background:#1f1f1f;"></div>
<div style="left:1844px;top:693.5px;width:4.8px;height:111.5px;background:#1f1f1f;"></div>
<div style="left:1838px;top:750px;width:4.8px;height:7.5px;background:#4b8a4a;"></div>
<div style="left:1838px;top:757px;width:4.8px;height:48px;background:#3fe35e;"></div>
<div style="left:1844px;top:750px;width:4.8px;height:7.5px;background:#4b8a4a;"></div>
<div style="left:1844px;top:757px;width:4.8px;height:48px;background:#3fe35e;"></div>
<div style="left:1838px;top:741.5px;width:10.8px;height:1px;background:#9be08a;"></div>
<div style="left:1838px;top:704.3px;width:10.8px;height:1px;background:#b0b0b0;"></div>
<div style="left:1743px;top:704.3px;width:10.4px;height:1px;background:#9a9a9a;"></div>
<span class="ab" style="left:1850px;top:697.5px;width:22px;text-align:right;font-size:10px;line-height:13px;color:#111;">0</span>
<span class="ab" style="left:1850px;top:720.3px;width:22px;text-align:right;font-size:10px;line-height:13px;color:#111;">12</span>
<span class="ab" style="left:1850px;top:742.1px;width:22px;text-align:right;font-size:10px;line-height:13px;color:#111;">24</span>
<span class="ab" style="left:1850px;top:763.0px;width:22px;text-align:right;font-size:10px;line-height:13px;color:#111;">36</span>
<span class="ab" style="left:1850px;top:779.1px;width:22px;text-align:right;font-size:10px;line-height:13px;color:#111;">48</span>
<span class="ab" style="left:1850px;top:791.8px;width:22px;text-align:right;font-size:10px;line-height:13px;color:#111;">60</span>
<div style="left:1852.0px;top:693.5px;width:3px;height:1px;background:#727272;"></div>
<div style="left:1852.0px;top:703.5px;width:3.5px;height:1px;background:#2a2a2a;"></div>
<div style="left:1852.0px;top:714.5px;width:3px;height:1px;background:#727272;"></div>
<div style="left:1852.0px;top:726.3px;width:3.5px;height:1px;background:#2a2a2a;"></div>
<div style="left:1852.0px;top:736.5px;width:3px;height:1px;background:#727272;"></div>
<div style="left:1852.0px;top:748.1px;width:3.5px;height:1px;background:#2a2a2a;"></div>
<div style="left:1852.0px;top:758.5px;width:3px;height:1px;background:#727272;"></div>
<div style="left:1852.0px;top:769.0px;width:3.5px;height:1px;background:#2a2a2a;"></div>
<div style="left:1852.0px;top:777.5px;width:3px;height:1px;background:#727272;"></div>
<div style="left:1852.0px;top:785.1px;width:3.5px;height:1px;background:#2a2a2a;"></div>
<div style="left:1852.0px;top:791.5px;width:3px;height:1px;background:#727272;"></div>
<div style="left:1852.0px;top:797.8px;width:3.5px;height:1px;background:#2a2a2a;"></div>
<div style="left:1852.0px;top:803.5px;width:3px;height:1px;background:#727272;"></div>
<svg width="12" height="12" style="left:1850.0px;top:699px"><path d="M10,0.8 V9.8 L1,5.3 Z" fill="#c4c4c4" stroke="#222" stroke-width="1"/></svg>
<div class="ab" style="left:1796px;top:694px;width:34.5px;height:12px;background:#e2e2e2;border:1px solid #333;border-radius:6px;text-align:center;line-height:10px;font-size:10.5px;">-1.52</div>
<svg width="30" height="34" style="left:1798.6px;top:712px"><path d="M12.2,1.5 H17.8 L15,4.8 Z" fill="#222"/><path d="M6.8,27.6 A12,12 0 1 1 23.2,27.6" fill="none" stroke="#1c1c1c" stroke-width="2.8"/><path d="M15,18.3 V6" stroke="#1c1c1c" stroke-width="2"/></svg>
<div class="ab" style="left:1801px;top:758.7px;width:24.7px;height:12px;background:#d9d9d9;border:1px solid #333;text-align:center;line-height:10px;font-size:10.5px;color:#333;">Solo</div>
<svg width="30" height="34" style="left:1798.6px;top:775px"><path d="M6.8,22.3 A12,12 0 1 1 25.8,9" fill="none" stroke="#1f6dff" stroke-width="2.6"/><path d="M15,13.2 L26.3,16.2" stroke="#1c1c1c" stroke-width="2.2"/><path d="M22.8,23.8 L25.6,20" stroke="#1c1c1c" stroke-width="2.4"/><path d="M12,24 V22.6 A3,3 0 0 1 18,22.6 V24" fill="none" stroke="#222" stroke-width="1.3"/><rect x="11.2" y="22.6" width="2.2" height="3.2" rx="0.8" fill="#222"/><rect x="16.6" y="22.6" width="2.2" height="3.2" rx="0.8" fill="#222"/></svg>
<div style="left:1377px;top:808.5px;width:502px;height:2.5px;background:#555;"></div>
<div style="left:1611.5px;top:818px;width:8.7px;height:3.6px;background:#2b2b2b;"></div>
<div style="left:1621.5px;top:818px;width:8.7px;height:3.6px;background:#2b2b2b;"></div>
<div style="left:1631.5px;top:818px;width:8.7px;height:3.6px;background:#2b2b2b;"></div>
<div style="left:1641.5px;top:818px;width:8.7px;height:3.6px;background:#2b2b2b;"></div>
<div style="left:1651.5px;top:818px;width:8.7px;height:3.6px;background:#2b2b2b;"></div>
<div style="left:1661.5px;top:818px;width:8.7px;height:3.6px;background:#2b2b2b;"></div>
<div style="left:1707px;top:818px;width:8.7px;height:3.6px;background:#2b2b2b;"></div>
<div style="left:1717px;top:818px;width:8.7px;height:3.6px;background:#2b2b2b;"></div>
<div style="left:1727px;top:818px;width:8.7px;height:3.6px;background:#2b2b2b;"></div>
<div style="left:1737px;top:818px;width:8.7px;height:3.6px;background:#2b2b2b;"></div>
<div style="left:1747px;top:818px;width:8.7px;height:3.6px;background:#2b2b2b;"></div>
<div style="left:1757px;top:818px;width:8.7px;height:3.6px;background:#2b2b2b;"></div>
<div style="left:1802px;top:818px;width:8.7px;height:3.6px;background:#4a3a1e;"></div>
<div style="left:1812px;top:818px;width:8.7px;height:3.6px;background:#2b2b2b;"></div>
<div style="left:1822px;top:818px;width:8.7px;height:3.6px;background:#2b2b2b;"></div>
<div style="left:1832px;top:818px;width:8.7px;height:3.6px;background:#2b2b2b;"></div>
<div style="left:1842px;top:818px;width:8.7px;height:3.6px;background:#2b2b2b;"></div>
<div style="left:1852px;top:818px;width:8.7px;height:3.6px;background:#2b2b2b;"></div>
<svg width="30" height="40" style="left:1881px;top:28px"><circle cx="14" cy="11" r="8.5" fill="#5a5a5a"/><path d="M9,7.5 H19 M9,11 H19 M9,14.5 H19" stroke="#9a9a9a" stroke-width="1.6"/><circle cx="14" cy="34" r="8.5" fill="#5a5a5a"/><path d="M10.3,29 V39 M14,29 V39 M17.7,29 V39" stroke="#f7a52c" stroke-width="2.2"/></svg>
<div style="left:1880px;top:76px;width:25px;height:757px;background:#4b4b4b;border-radius:0 6px 6px 0;"></div>
<div class="ab" style="left:1884.8px;top:704.8px;width:12.4px;height:12.4px;background:#f7a52c;border-radius:50%;text-align:center;line-height:12.4px;font-size:6px;color:#fde6b8;font-weight:bold;">I·O</div>
<div class="ab" style="left:1884.8px;top:755.8px;width:12.4px;height:12.4px;background:#f7a52c;border-radius:50%;text-align:center;line-height:12.4px;font-size:6px;color:#fde6b8;font-weight:bold;">M</div>
<div class="ab" style="left:1884.8px;top:775.0px;width:12.4px;height:12.4px;background:#141414;border-radius:50%;text-align:center;line-height:12.4px;font-size:6px;color:#7a7a7a;font-weight:bold;">D</div>
<div class="ab" style="left:1884.8px;top:793.8px;width:12.4px;height:12.4px;background:#141414;border-radius:50%;text-align:center;line-height:12.4px;font-size:6px;color:#7a7a7a;font-weight:bold;">✕</div>
<div class="ab" style="left:1884.8px;top:812.8px;width:12.4px;height:12.4px;background:#f7a52c;border-radius:50%;text-align:center;line-height:12.4px;font-size:6px;color:#fde6b8;font-weight:bold;">C</div>
<div style="left:1884.8px;top:724px;width:12.4px;height:25.5px;background:#f7a52c;border-radius:6.2px;"></div>
<div style="left:1884.8px;top:736.3px;width:12.4px;height:1px;background:#6a4a10;"></div>
<span class="ab" style="left:1884.8px;top:725.5px;width:12.4px;text-align:center;font-size:6px;line-height:10px;color:#fde6b8;font-weight:bold;">S</span>
<span class="ab" style="left:1884.8px;top:738.2px;width:12.4px;text-align:center;font-size:6px;line-height:10px;color:#fde6b8;font-weight:bold;">R</span>
<div style="left:1px;top:840.5px;width:1905px;height:197px;background:#555;border-radius:6px;"></div>
<div style="left:5px;top:845px;width:1897px;height:188px;background:#878787;"></div>
<div style="left:5px;top:845px;width:11px;height:188px;background:#5b5b5b;"></div>
<div style="left:7.3px;top:920.0px;width:2.3px;height:2.3px;background:#333;border-radius:50%;"></div>
<div style="left:7.3px;top:923.4px;width:2.3px;height:2.3px;background:#333;border-radius:50%;"></div>
<div style="left:7.3px;top:926.8px;width:2.3px;height:2.3px;background:#333;border-radius:50%;"></div>
<div style="left:7.3px;top:930.2px;width:2.3px;height:2.3px;background:#333;border-radius:50%;"></div>
<div style="left:7.3px;top:933.6px;width:2.3px;height:2.3px;background:#333;border-radius:50%;"></div>
<div style="left:7.3px;top:937.0px;width:2.3px;height:2.3px;background:#333;border-radius:50%;"></div>
<div style="left:7.3px;top:940.4px;width:2.3px;height:2.3px;background:#f7a52c;border-radius:50%;"></div>
<div style="left:7.3px;top:943.8px;width:2.3px;height:2.3px;background:#333;border-radius:50%;"></div>
<div style="left:7.3px;top:947.2px;width:2.3px;height:2.3px;background:#333;border-radius:50%;"></div>
<div style="left:7.3px;top:950.6px;width:2.3px;height:2.3px;background:#333;border-radius:50%;"></div>
<div style="left:7.3px;top:954.0px;width:2.3px;height:2.3px;background:#333;border-radius:50%;"></div>
<div style="left:7.3px;top:957.4px;width:2.3px;height:2.3px;background:#333;border-radius:50%;"></div>
<div style="left:15.7px;top:845px;width:90px;height:17px;background:#a6a6a6;"></div>
<svg width="14" height="14" style="left:18px;top:847px"><circle cx="7" cy="6.8" r="5.8" fill="#ffa62b" stroke="#2a2a2a" stroke-width="1"/></svg>
<span class="ab" style="left:36px;top:847.5px;font-size:10.5px;line-height:12.5px;color:#111;font-weight:bold;">FPB_Pop_Up</span>
<div style="left:15.7px;top:862px;width:90px;height:170px;background:#000;"></div>
<div class="ab" style="left:29px;top:884px;width:40px;height:20px;background:#2b2b2b;border-top:3px solid #1be24b;border-bottom:3px solid #1be24b;text-align:center;line-height:13px;font-size:9.5px;color:#fff;font-weight:bold;">midiin</div>
<div style="left:85px;top:885.5px;width:30px;height:18px;background:#0a6a2c;border:1px solid #cfe3d4;border-radius:3px;"></div>
<div style="left:87.5px;top:913.5px;width:30px;height:46.5px;background:#0a6a2c;border:1px solid #cfe3d4;border-radius:3px;"></div>
<div class="ab" style="left:30px;top:914px;width:44.6px;height:44.6px;border:1px solid #fff;border-radius:50%;color:#fff;text-align:center;line-height:42px;font-size:7.5px;font-weight:bold;">Clear</div>
<div style="left:74.6px;top:937.5px;width:13px;height:1px;background:#fff;"></div>
<div class="ab" style="left:35px;top:968.8px;width:36px;height:20.3px;background:#fff;border:1px solid #ccc;border-radius:3px;text-align:center;line-height:19px;font-size:8px;font-weight:bold;color:#1c8a43;">Flats</div>
<div style="left:71px;top:978.5px;width:13.5px;height:1px;background:#fff;"></div>
<div style="left:52.5px;top:989px;width:1px;height:7px;background:#fff;"></div>
<div class="ab" style="left:84.3px;top:968.3px;width:30px;height:21.5px;background:#000;border:1px solid #fff;border-radius:3px;color:#fff;font-size:9px;line-height:19px;padding-left:7px;">S</div>
<div class="ab" style="left:35.5px;top:996px;width:80px;height:18.5px;background:#fba32f;color:#111;font-size:9px;line-height:18.5px;padding-left:15px;">Scale_Spel</div>
<svg width="22" height="22" style="left:0px;top:1045px"><circle cx="10.3" cy="10.3" r="9.3" fill="#555"/><path d="M5.8,4.8 L15.5,10.3 L5.8,15.8 Z" fill="none" stroke="#a8a8a8" stroke-width="1.6" stroke-linejoin="round"/></svg>
<div style="left:28.5px;top:1045.5px;width:1473px;height:21px;background:#555;border-radius:3px;"></div>
<div style="left:31px;top:1048px;width:1468px;height:16px;background:#878787;"></div>
<div style="left:1509px;top:1045.5px;width:208px;height:21px;background:#555;border-radius:3px;"></div>
<div style="left:1511.5px;top:1048px;width:203px;height:16px;background:#878787;"></div>
<div style="left:1724px;top:1037px;width:155px;height:30px;background:#4f4f4f;border-radius:0 0 5px 5px;"></div>
<span class="ab" style="left:1728.5px;top:1050px;font-size:10.5px;line-height:12.5px;color:#111;-webkit-text-stroke:0.4px #111;letter-spacing:0.3px;">1-TransAm Piano</span>
<div class="ab" style="left:1814px;top:1048.5px;width:38px;height:15.5px;background:#a2a2a2;border-top:1.5px solid #8fc7e8;font-size:9px;line-height:16px;overflow:hidden;">FPB_Pop</div>
<div style="left:1853.6px;top:1048.5px;width:20.5px;height:15.5px;background:repeating-linear-gradient(90deg,#9c9c9c 0 3px,#b4b4b4 3px 5px);"></div>
<svg width="22" height="22" style="left:1885px;top:1045px"><circle cx="10.3" cy="10.8" r="9.3" fill="#4d4d4d"/><path d="M4.8,15.3 L10.3,4.5 L15.8,15.3 Z" fill="#a6a6a6"/></svg>
<div class="win" style="left:241px;top:41.5px;width:1229.5px;height:201px;">
<div class="tb" style="height:18.5px;background:#e8e8e8;"></div>
<div class="tl" style="left:4.5px;top:4.25px;background:#d2d2d2;border-color:#bdbdbd"></div>
<div class="tl" style="left:19.5px;top:4.25px;background:#d2d2d2;border-color:#bdbdbd"></div>
<div class="tl" style="left:34.5px;top:4.25px;background:#d2d2d2;border-color:#bdbdbd"></div>
<div style="left:0;right:0;top:0;height:18.5px;line-height:18.5px;text-align:center;font-size:12px;color:#a9a9a9;">[popup_piano]</div>
<span style="left:14.5px;top:50.5px;font-size:12px;line-height:12px;color:#fff;">Set Scale</span>
<span style="left:72px;top:50.5px;font-size:12px;line-height:12px;color:#fff;">C</span>
<div class="arr" style="left:91px;top:54.5px;width:0px;height:0px;"></div>
<span style="left:114px;top:50.5px;font-size:12px;line-height:12px;color:#fff;">Major</span>
<div class="arr" style="left:176px;top:54.5px;width:0px;height:0px;"></div>
<div class="flats" style="left:196px;top:44.5px;width:36px;height:20.5px;line-height:20.5px;">Flats</div>
<div class="sg" style="left:243px;top:44.5px;width:82px;height:20.5px;line-height:18px;">Scale_Guide</div>
<div class="clr" style="left:337px;top:38.0px;width:32px;height:32px;line-height:29px;font-size:8px;">Clear</div>
<span style="left:529.2px;top:23.099999999999994px;font-size:49px;line-height:49px;color:#fff;">C Major</span>
<span style="left:922px;top:41.2px;font-size:30px;line-height:30px;color:#9a9a9a;">last played note:</span>
<span style="left:1164.4px;top:40.2px;font-size:33px;line-height:33px;color:#9a9a9a;">F3</span>
<div style="left:2px;top:78.5px;width:1227.5px;height:29px;background:#333831;"></div>
<span style="left:540.7px;top:82.5px;font-size:20.3px;line-height:20.3px;color:#fff;-webkit-text-stroke:0.3px #fff;">C D E F G A B C</span>
<div class="hz" style="left:1161px;top:84.5px;width:46px;height:10.5px;line-height:10.5px;">349 Hz</div>
<svg width="1230" height="93" style="left:2.2px;top:107.25px">
<rect x="0.00" y="0" width="24.04" height="93" fill="#a9964d" stroke="#3c5a3c" stroke-width="0.9"/>
<rect x="24.04" y="0" width="24.04" height="93" fill="#7f9d7b" stroke="#3c5a3c" stroke-width="0.9"/>
<rect x="48.08" y="0" width="24.04" height="93" fill="#7f9d7b" stroke="#3c5a3c" stroke-width="0.9"/>
<rect x="72.12" y="0" width="24.04" height="93" fill="#7f9d7b" stroke="#3c5a3c" stroke-width="0.9"/>
<rect x="96.16" y="0" width="24.04" height="93" fill="#7f9d7b" stroke="#3c5a3c" stroke-width="0.9"/>
<rect x="120.20" y="0" width="24.04" height="93" fill="#7f9d7b" stroke="#3c5a3c" stroke-width="0.9"/>
<rect x="144.24" y="0" width="24.04" height="93" fill="#7f9d7b" stroke="#3c5a3c" stroke-width="0.9"/>
<rect x="168.28" y="0" width="24.04" height="93" fill="#a9964d" stroke="#3c5a3c" stroke-width="0.9"/>
<rect x="192.32" y="0" width="24.04" height="93" fill="#7f9d7b" stroke="#3c5a3c" stroke-width="0.9"/>
<rect x="216.36" y="0" width="24.04" height="93" fill="#7f9d7b" stroke="#3c5a3c" stroke-width="0.9"/>
<rect x="240.40" y="0" width="24.04" height="93" fill="#7f9d7b" stroke="#3c5a3c" stroke-width="0.9"/>
<rect x="264.44" y="0" width="24.04" height="93" fill="#7f9d7b" stroke="#3c5a3c" stroke-width="0.9"/>
<rect x="288.48" y="0" width="24.04" height="93" fill="#7f9d7b" stroke="#3c5a3c" stroke-width="0.9"/>
<rect x="312.52" y="0" width="24.04" height="93" fill="#7f9d7b" stroke="#3c5a3c" stroke-width="0.9"/>
<rect x="336.56" y="0" width="24.04" height="93" fill="#a9964d" stroke="#3c5a3c" stroke-width="0.9"/>
<rect x="360.60" y="0" width="24.04" height="93" fill="#7f9d7b" stroke="#3c5a3c" stroke-width="0.9"/>
<rect x="384.64" y="0" width="24.04" height="93" fill="#7f9d7b" stroke="#3c5a3c" stroke-width="0.9"/>
<rect x="408.68" y="0" width="24.04" height="93" fill="#02e03a" stroke="#3c5a3c" stroke-width="0.9"/>
<rect x="432.72" y="0" width="24.04" height="93" fill="#7f9d7b" stroke="#3c5a3c" stroke-width="0.9"/>
<rect x="456.76" y="0" width="24.04" height="93" fill="#02e03a" stroke="#3c5a3c" stroke-width="0.9"/>
<rect x="480.80" y="0" width="24.04" height="93" fill="#7f9d7b" stroke="#3c5a3c" stroke-width="0.9"/>
<rect x="504.84" y="0" width="24.04" height="93" fill="#02e03a" stroke="#3c5a3c" stroke-width="0.9"/>
<rect x="528.88" y="0" width="24.04" height="93" fill="#7f9d7b" stroke="#3c5a3c" stroke-width="0.9"/>
<rect x="552.92" y="0" width="24.04" height="93" fill="#02e03a" stroke="#3c5a3c" stroke-width="0.9"/>
<rect x="576.96" y="0" width="24.04" height="93" fill="#02e03a" stroke="#3c5a3c" stroke-width="0.9"/>
<rect x="601.00" y="0" width="24.04" height="93" fill="#7f9d7b" stroke="#3c5a3c" stroke-width="0.9"/>
<rect x="625.04" y="0" width="24.04" height="93" fill="#7f9d7b" stroke="#3c5a3c" stroke-width="0.9"/>
<rect x="649.08" y="0" width="24.04" height="93" fill="#7f9d7b" stroke="#3c5a3c" stroke-width="0.9"/>
<rect x="673.12" y="0" width="24.04" height="93" fill="#a9964d" stroke="#3c5a3c" stroke-width="0.9"/>
<rect x="697.16" y="0" width="24.04" height="93" fill="#7f9d7b" stroke="#3c5a3c" stroke-width="0.9"/>
<rect x="721.20" y="0" width="24.04" height="93" fill="#7f9d7b" stroke="#3c5a3c" stroke-width="0.9"/>
<rect x="745.24" y="0" width="24.04" height="93" fill="#7f9d7b" stroke="#3c5a3c" stroke-width="0.9"/>
<rect x="769.28" y="0" width="24.04" height="93" fill="#7f9d7b" stroke="#3c5a3c" stroke-width="0.9"/>
<rect x="793.32" y="0" width="24.04" height="93" fill="#7f9d7b" stroke="#3c5a3c" stroke-width="0.9"/>
<rect x="817.36" y="0" width="24.04" height="93" fill="#7f9d7b" stroke="#3c5a3c" stroke-width="0.9"/>
<rect x="841.40" y="0" width="24.04" height="93" fill="#a9964d" stroke="#3c5a3c" stroke-width="0.9"/>
<rect x="865.44" y="0" width="24.04" height="93" fill="#7f9d7b" stroke="#3c5a3c" stroke-width="0.9"/>
<rect x="889.48" y="0" width="24.04" height="93" fill="#7f9d7b" stroke="#3c5a3c" stroke-width="0.9"/>
<rect x="913.52" y="0" width="24.04" height="93" fill="#7f9d7b" stroke="#3c5a3c" stroke-width="0.9"/>
<rect x="937.56" y="0" width="24.04" height="93" fill="#7f9d7b" stroke="#3c5a3c" stroke-width="0.9"/>
<rect x="961.60" y="0" width="24.04" height="93" fill="#7f9d7b" stroke="#3c5a3c" stroke-width="0.9"/>
<rect x="985.64" y="0" width="24.04" height="93" fill="#7f9d7b" stroke="#3c5a3c" stroke-width="0.9"/>
<rect x="1009.68" y="0" width="24.04" height="93" fill="#a9964d" stroke="#3c5a3c" stroke-width="0.9"/>
<rect x="1033.72" y="0" width="24.04" height="93" fill="#7f9d7b" stroke="#3c5a3c" stroke-width="0.9"/>
<rect x="1057.76" y="0" width="24.04" height="93" fill="#7f9d7b" stroke="#3c5a3c" stroke-width="0.9"/>
<rect x="1081.80" y="0" width="24.04" height="93" fill="#7f9d7b" stroke="#3c5a3c" stroke-width="0.9"/>
<rect x="1105.84" y="0" width="24.04" height="93" fill="#7f9d7b" stroke="#3c5a3c" stroke-width="0.9"/>
<rect x="1129.88" y="0" width="24.04" height="93" fill="#7f9d7b" stroke="#3c5a3c" stroke-width="0.9"/>
<rect x="1153.92" y="0" width="24.04" height="93" fill="#7f9d7b" stroke="#3c5a3c" stroke-width="0.9"/>
<rect x="1177.96" y="0" width="24.04" height="93" fill="#a9964d" stroke="#3c5a3c" stroke-width="0.9"/>
<rect x="1202.00" y="0" width="24.04" height="93" fill="#7f9d7b" stroke="#3c5a3c" stroke-width="0.9"/>
<rect x="16.04" y="0" width="16" height="50.7" fill="#000"/>
<rect x="40.08" y="0" width="16" height="50.7" fill="#000"/>
<rect x="88.16" y="0" width="16" height="50.7" fill="#000"/>
<rect x="112.20" y="0" width="16" height="50.7" fill="#000"/>
<rect x="136.24" y="0" width="16" height="50.7" fill="#000"/>
<rect x="184.32" y="0" width="16" height="50.7" fill="#000"/>
<rect x="208.36" y="0" width="16" height="50.7" fill="#000"/>
<rect x="256.44" y="0" width="16" height="50.7" fill="#000"/>
<rect x="280.48" y="0" width="16" height="50.7" fill="#000"/>
<rect x="304.52" y="0" width="16" height="50.7" fill="#000"/>
<rect x="352.60" y="0" width="16" height="50.7" fill="#000"/>
<rect x="376.64" y="0" width="16" height="50.7" fill="#000"/>
<rect x="424.72" y="0" width="16" height="50.7" fill="#000"/>
<rect x="448.76" y="0" width="16" height="50.7" fill="#000"/>
<rect x="472.80" y="0" width="16" height="50.7" fill="#000"/>
<rect x="520.88" y="0" width="16" height="50.7" fill="#000"/>
<rect x="544.92" y="0" width="16" height="50.7" fill="#000"/>
<rect x="593.00" y="0" width="16" height="50.7" fill="#000"/>
<rect x="617.04" y="0" width="16" height="50.7" fill="#000"/>
<rect x="641.08" y="0" width="16" height="50.7" fill="#000"/>
<rect x="689.16" y="0" width="16" height="50.7" fill="#000"/>
<rect x="713.20" y="0" width="16" height="50.7" fill="#000"/>
<rect x="761.28" y="0" width="16" height="50.7" fill="#000"/>
<rect x="785.32" y="0" width="16" height="50.7" fill="#000"/>
<rect x="809.36" y="0" width="16" height="50.7" fill="#000"/>
<rect x="857.44" y="0" width="16" height="50.7" fill="#000"/>
<rect x="881.48" y="0" width="16" height="50.7" fill="#000"/>
<rect x="929.56" y="0" width="16" height="50.7" fill="#000"/>
<rect x="953.60" y="0" width="16" height="50.7" fill="#000"/>
<rect x="977.64" y="0" width="16" height="50.7" fill="#000"/>
<rect x="1025.72" y="0" width="16" height="50.7" fill="#000"/>
<rect x="1049.76" y="0" width="16" height="50.7" fill="#000"/>
<rect x="1097.84" y="0" width="16" height="50.7" fill="#000"/>
<rect x="1121.88" y="0" width="16" height="50.7" fill="#000"/>
<rect x="1145.92" y="0" width="16" height="50.7" fill="#000"/>
<rect x="1194.00" y="0" width="16" height="50.7" fill="#000"/>
</svg>
</div>
<div class="win" style="left:1472px;top:45px;width:285px;height:159px;">
<div class="tb" style="height:19px;background:#e8e8e8;"></div>
<div class="tl" style="left:4.5px;top:4.5px;background:#d2d2d2;border-color:#bdbdbd"></div>
<div class="tl" style="left:19.5px;top:4.5px;background:#d2d2d2;border-color:#bdbdbd"></div>
<div class="tl" style="left:34.5px;top:4.5px;background:#d2d2d2;border-color:#bdbdbd"></div>
<div style="left:0;right:0;top:0;height:19px;line-height:19px;text-align:center;font-size:12px;color:#a9a9a9;">[popup_note]</div>
<span style="left:76px;top:27.5px;font-size:103px;line-height:103px;color:#999;">F3</span>
<div class="hz" style="left:117.5px;top:132.5px;width:47.5px;height:12px;line-height:12px;">349 Hz</div>
</div>
<div class="win" style="left:93px;top:228px;width:1200px;height:503px;">
<div class="tb" style="height:19px;background:#e8e8e8;"></div>
<div class="tl" style="left:4.5px;top:4.5px;background:#d2d2d2;border-color:#bdbdbd"></div>
<div class="tl" style="left:19.5px;top:4.5px;background:#d2d2d2;border-color:#bdbdbd"></div>
<div class="tl" style="left:34.5px;top:4.5px;background:#d2d2d2;border-color:#bdbdbd"></div>
<span style="left:559px;top:0px;font-size:12px;line-height:12px;color:#a9a9a9;line-height:19px;height:19px;">[popup_staves]</span>
<span style="left:152.5px;top:46px;font-size:12px;line-height:12px;color:#fff;">Set Scale:</span>
<span style="left:215px;top:46px;font-size:12px;line-height:12px;color:#fff;">C</span>
<div class="arr" style="left:234px;top:50px;width:0px;height:0px;"></div>
<span style="left:262px;top:46px;font-size:12px;line-height:12px;color:#fff;">Major</span>
<div class="arr" style="left:335px;top:50px;width:0px;height:0px;"></div>
<div class="flats" style="left:219px;top:65px;width:36px;height:20px;line-height:20.5px;">Flats</div>
<span style="left:456.29999999999995px;top:32.30000000000001px;font-size:65px;line-height:65px;color:#fff;">C Major</span>
<svg width="1" height="1" style="left:0;top:0"><path d="M372.93,76.11 A12.2,12.2 0 0 1 379.75,53.80" fill="none" stroke="#0d8a3a" stroke-width="2.4"/><path d="M379.75,53.80 A12.2,12.2 0 0 1 386.57,76.11" fill="none" stroke="#fff" stroke-width="2.4"/><line x1="379.75" y1="66" x2="379.75" y2="53.5" stroke="#fff" stroke-width="2"/></svg>
<span style="left:349.75px;top:42.5px;width:60px;text-align:center;font-size:9.6px;line-height:10px;color:#fff;-webkit-text-stroke:0.25px #fff;">Octave</span>
<span style="left:349.75px;top:79px;width:60px;text-align:center;font-size:10px;line-height:10px;color:#fff;">4</span>
<svg width="1" height="1" style="left:0;top:0"><path d="M423.43,76.11 A12.2,12.2 0 0 1 430.25,53.80" fill="none" stroke="#0d8a3a" stroke-width="2.4"/><path d="M430.25,53.80 A12.2,12.2 0 0 1 437.07,76.11" fill="none" stroke="#fff" stroke-width="2.4"/><line x1="430.25" y1="66" x2="430.25" y2="53.5" stroke="#0d8a3a" stroke-width="2"/></svg>
<span style="left:400.25px;top:42.5px;width:60px;text-align:center;font-size:9.6px;line-height:10px;color:#fff;-webkit-text-stroke:0.25px #fff;">Key Sig</span>
<span style="left:400.25px;top:79px;width:60px;text-align:center;font-size:10px;line-height:10px;color:#fff;">0</span>
<svg width="1200" height="503" style="left:0;top:0">
<g transform="translate(20.599999999999994,114)" fill="none" stroke="#454545" stroke-linecap="round" stroke-linejoin="round"><path d="M17.6,1.2 C21.2,4 22.9,9 22.2,14.5 C21.3,21.5 17,27 12,32.5" stroke-width="4.2"/><path d="M12,32.5 C6,38.5 2.4,42.5 2.4,49 C2.4,57 9,62.2 16,62.2 C24,62.2 28.3,57 28.3,51 C28.3,45 24.5,41 20,41 C14,41 9.6,45 9.6,50.5 C9.6,54 12,57 15,58" stroke-width="4.2"/><path d="M17.3,0.8 C12,5 9.8,10 10.6,16 L22.6,67 C23.6,72.5 20,76 13.5,75.8" stroke-width="2.1"/><circle cx="12.2" cy="70.8" r="4.4" fill="#454545" stroke="none"/></g>
<g transform="translate(19.39999999999999,350)" fill="#3a3a3a"><path d="M5,9 C5,3 10,0.3 16,0.3 C24,0.3 28.3,6 28.3,13.5 C28.3,25 15,33 0,35.6 L-0.3,34.6 C11,31 20.3,23 20.3,13 C20.3,6 18,2.3 14,2.3 C10,2.3 7.5,4.5 7,8 Z"/><circle cx="9.8" cy="11.2" r="5"/><circle cx="31.8" cy="6.2" r="2.8"/><circle cx="31.8" cy="16.7" r="2.8"/></g>
<g transform="translate(144.1,113)" fill="none" stroke="#454545" stroke-linecap="round" stroke-linejoin="round"><path d="M17.6,1.2 C21.2,4 22.9,9 22.2,14.5 C21.3,21.5 17,27 12,32.5" stroke-width="4.2"/><path d="M12,32.5 C6,38.5 2.4,42.5 2.4,49 C2.4,57 9,62.2 16,62.2 C24,62.2 28.3,57 28.3,51 C28.3,45 24.5,41 20,41 C14,41 9.6,45 9.6,50.5 C9.6,54 12,57 15,58" stroke-width="4.2"/><path d="M17.3,0.8 C12,5 9.8,10 10.6,16 L22.6,67 C23.6,72.5 20,76 13.5,75.8" stroke-width="2.1"/><circle cx="12.2" cy="70.8" r="4.4" fill="#454545" stroke="none"/></g>
<g transform="translate(142.9,349)" fill="#3a3a3a"><path d="M5,9 C5,3 10,0.3 16,0.3 C24,0.3 28.3,6 28.3,13.5 C28.3,25 15,33 0,35.6 L-0.3,34.6 C11,31 20.3,23 20.3,13 C20.3,6 18,2.3 14,2.3 C10,2.3 7.5,4.5 7,8 Z"/><circle cx="9.8" cy="11.2" r="5"/><circle cx="31.8" cy="6.2" r="2.8"/><circle cx="31.8" cy="16.7" r="2.8"/></g>
<line x1="19.5" y1="130.5" x2="127.5" y2="130.5" stroke="#8a8a8a" stroke-width="0.8"/>
<line x1="19.5" y1="141.5" x2="127.5" y2="141.5" stroke="#8a8a8a" stroke-width="0.8"/>
<line x1="19.5" y1="152.5" x2="127.5" y2="152.5" stroke="#8a8a8a" stroke-width="0.8"/>
<line x1="19.5" y1="163.5" x2="127.5" y2="163.5" stroke="#8a8a8a" stroke-width="0.8"/>
<line x1="19.5" y1="174.5" x2="127.5" y2="174.5" stroke="#8a8a8a" stroke-width="0.8"/>
<line x1="19.5" y1="207.5" x2="127.5" y2="207.5" stroke="#d6d6d6" stroke-width="1.1"/>
<line x1="19.5" y1="218.5" x2="127.5" y2="218.5" stroke="#d6d6d6" stroke-width="1.1"/>
<line x1="19.5" y1="229.5" x2="127.5" y2="229.5" stroke="#d6d6d6" stroke-width="1.1"/>
<line x1="19.5" y1="240.5" x2="127.5" y2="240.5" stroke="#d6d6d6" stroke-width="1.1"/>
<line x1="19.5" y1="251.5" x2="127.5" y2="251.5" stroke="#d6d6d6" stroke-width="1.1"/>
<line x1="19.5" y1="273.5" x2="127.5" y2="273.5" stroke="#d6d6d6" stroke-width="1.1"/>
<line x1="19.5" y1="284.5" x2="127.5" y2="284.5" stroke="#d6d6d6" stroke-width="1.1"/>
<line x1="19.5" y1="295.5" x2="127.5" y2="295.5" stroke="#d6d6d6" stroke-width="1.1"/>
<line x1="19.5" y1="306.5" x2="127.5" y2="306.5" stroke="#d6d6d6" stroke-width="1.1"/>
<line x1="19.5" y1="317.5" x2="127.5" y2="317.5" stroke="#d6d6d6" stroke-width="1.1"/>
<line x1="19.5" y1="350.5" x2="127.5" y2="350.5" stroke="#8a8a8a" stroke-width="0.8"/>
<line x1="19.5" y1="361.5" x2="127.5" y2="361.5" stroke="#8a8a8a" stroke-width="0.8"/>
<line x1="19.5" y1="372.5" x2="127.5" y2="372.5" stroke="#8a8a8a" stroke-width="0.8"/>
<line x1="19.5" y1="383.5" x2="127.5" y2="383.5" stroke="#8a8a8a" stroke-width="0.8"/>
<line x1="19.5" y1="394.5" x2="127.5" y2="394.5" stroke="#8a8a8a" stroke-width="0.8"/>
<line x1="19.5" y1="130.0" x2="19.5" y2="395.0" stroke="#ddd" stroke-width="1.3"/>
<line x1="144.2" y1="129.5" x2="1179.5" y2="129.5" stroke="#8a8a8a" stroke-width="0.8"/>
<line x1="144.2" y1="140.5" x2="1179.5" y2="140.5" stroke="#8a8a8a" stroke-width="0.8"/>
<line x1="144.2" y1="151.5" x2="1179.5" y2="151.5" stroke="#8a8a8a" stroke-width="0.8"/>
<line x1="144.2" y1="162.5" x2="1179.5" y2="162.5" stroke="#8a8a8a" stroke-width="0.8"/>
<line x1="144.2" y1="173.5" x2="1179.5" y2="173.5" stroke="#8a8a8a" stroke-width="0.8"/>
<line x1="144.2" y1="206.5" x2="1179.5" y2="206.5" stroke="#d6d6d6" stroke-width="1.1"/>
<line x1="144.2" y1="217.5" x2="1179.5" y2="217.5" stroke="#d6d6d6" stroke-width="1.1"/>
<line x1="144.2" y1="228.5" x2="1179.5" y2="228.5" stroke="#d6d6d6" stroke-width="1.1"/>
<line x1="144.2" y1="239.5" x2="1179.5" y2="239.5" stroke="#d6d6d6" stroke-width="1.1"/>
<line x1="144.2" y1="250.5" x2="1179.5" y2="250.5" stroke="#d6d6d6" stroke-width="1.1"/>
<line x1="144.2" y1="272.5" x2="1179.5" y2="272.5" stroke="#d6d6d6" stroke-width="1.1"/>
<line x1="144.2" y1="283.5" x2="1179.5" y2="283.5" stroke="#d6d6d6" stroke-width="1.1"/>
<line x1="144.2" y1="294.5" x2="1179.5" y2="294.5" stroke="#d6d6d6" stroke-width="1.1"/>
<line x1="144.2" y1="305.5" x2="1179.5" y2="305.5" stroke="#d6d6d6" stroke-width="1.1"/>
<line x1="144.2" y1="316.5" x2="1179.5" y2="316.5" stroke="#d6d6d6" stroke-width="1.1"/>
<line x1="144.2" y1="349.5" x2="1179.5" y2="349.5" stroke="#8a8a8a" stroke-width="0.8"/>
<line x1="144.2" y1="360.5" x2="1179.5" y2="360.5" stroke="#8a8a8a" stroke-width="0.8"/>
<line x1="144.2" y1="371.5" x2="1179.5" y2="371.5" stroke="#8a8a8a" stroke-width="0.8"/>
<line x1="144.2" y1="382.5" x2="1179.5" y2="382.5" stroke="#8a8a8a" stroke-width="0.8"/>
<line x1="144.2" y1="393.5" x2="1179.5" y2="393.5" stroke="#8a8a8a" stroke-width="0.8"/>
<line x1="144.2" y1="129.0" x2="144.2" y2="394.0" stroke="#ddd" stroke-width="1.3"/>
<g transform="translate(20.599999999999994,190.60000000000002)" fill="none" stroke="#fff" stroke-linecap="round" stroke-linejoin="round"><path d="M17.6,1.2 C21.2,4 22.9,9 22.2,14.5 C21.3,21.5 17,27 12,32.5" stroke-width="4.2"/><path d="M12,32.5 C6,38.5 2.4,42.5 2.4,49 C2.4,57 9,62.2 16,62.2 C24,62.2 28.3,57 28.3,51 C28.3,45 24.5,41 20,41 C14,41 9.6,45 9.6,50.5 C9.6,54 12,57 15,58" stroke-width="4.2"/><path d="M17.3,0.8 C12,5 9.8,10 10.6,16 L22.6,67 C23.6,72.5 20,76 13.5,75.8" stroke-width="2.1"/><circle cx="12.2" cy="70.8" r="4.4" fill="#fff" stroke="none"/></g>
<g transform="translate(19.39999999999999,273)" fill="#fff"><path d="M5,9 C5,3 10,0.3 16,0.3 C24,0.3 28.3,6 28.3,13.5 C28.3,25 15,33 0,35.6 L-0.3,34.6 C11,31 20.3,23 20.3,13 C20.3,6 18,2.3 14,2.3 C10,2.3 7.5,4.5 7,8 Z"/><circle cx="9.8" cy="11.2" r="5"/><circle cx="31.8" cy="6.2" r="2.8"/><circle cx="31.8" cy="16.7" r="2.8"/></g>
<g transform="translate(144.1,189.60000000000002)" fill="none" stroke="#fff" stroke-linecap="round" stroke-linejoin="round"><path d="M17.6,1.2 C21.2,4 22.9,9 22.2,14.5 C21.3,21.5 17,27 12,32.5" stroke-width="4.2"/><path d="M12,32.5 C6,38.5 2.4,42.5 2.4,49 C2.4,57 9,62.2 16,62.2 C24,62.2 28.3,57 28.3,51 C28.3,45 24.5,41 20,41 C14,41 9.6,45 9.6,50.5 C9.6,54 12,57 15,58" stroke-width="4.2"/><path d="M17.3,0.8 C12,5 9.8,10 10.6,16 L22.6,67 C23.6,72.5 20,76 13.5,75.8" stroke-width="2.1"/><circle cx="12.2" cy="70.8" r="4.4" fill="#fff" stroke="none"/></g>
<g transform="translate(142.9,272)" fill="#fff"><path d="M5,9 C5,3 10,0.3 16,0.3 C24,0.3 28.3,6 28.3,13.5 C28.3,25 15,33 0,35.6 L-0.3,34.6 C11,31 20.3,23 20.3,13 C20.3,6 18,2.3 14,2.3 C10,2.3 7.5,4.5 7,8 Z"/><circle cx="9.8" cy="11.2" r="5"/><circle cx="31.8" cy="6.2" r="2.8"/><circle cx="31.8" cy="16.7" r="2.8"/></g>
<line x1="195" y1="261.5" x2="217" y2="261.5" stroke="#bbb" stroke-width="1.1"/>
<ellipse cx="205.89999999999998" cy="261.5" rx="8.3" ry="5.6" transform="rotate(-22 205.89999999999998 261.5)" fill="#0cbf40"/>
<line x1="198.7" y1="262.5" x2="198.7" y2="300.0" stroke="#0cbf40" stroke-width="1.6"/>
<ellipse cx="284.8" cy="256" rx="8.3" ry="5.6" transform="rotate(-22 284.8 256)" fill="#fff"/>
<line x1="277.6" y1="257" x2="277.6" y2="294.5" stroke="#fff" stroke-width="1.6"/>
<ellipse cx="363.7" cy="250.5" rx="8.3" ry="5.6" transform="rotate(-22 363.7 250.5)" fill="#0cbf40"/>
<line x1="356.5" y1="251.5" x2="356.5" y2="289.0" stroke="#0cbf40" stroke-width="1.6"/>
<ellipse cx="442.6" cy="245" rx="8.3" ry="5.6" transform="rotate(-22 442.6 245)" fill="#0cbf40"/>
<line x1="435.40000000000003" y1="246" x2="435.40000000000003" y2="283.5" stroke="#0cbf40" stroke-width="1.6"/>
<ellipse cx="522.2" cy="239.5" rx="8.3" ry="5.6" transform="rotate(-22 522.2 239.5)" fill="#fff"/>
<line x1="515.0" y1="240.5" x2="515.0" y2="278.0" stroke="#fff" stroke-width="1.6"/>
<ellipse cx="600" cy="234" rx="8.3" ry="5.6" transform="rotate(-22 600 234)" fill="#0cbf40"/>
<line x1="592.8" y1="235" x2="592.8" y2="272.5" stroke="#0cbf40" stroke-width="1.6"/>
<ellipse cx="679" cy="228.5" rx="8.3" ry="5.6" transform="rotate(-22 679 228.5)" fill="#fff"/>
<line x1="671.8" y1="229.5" x2="671.8" y2="267.0" stroke="#fff" stroke-width="1.6"/>
<ellipse cx="757.9" cy="223" rx="8.3" ry="5.6" transform="rotate(-22 757.9 223)" fill="#0cbf40"/>
<line x1="750.6999999999999" y1="224" x2="750.6999999999999" y2="261.5" stroke="#0cbf40" stroke-width="1.6"/>
<line x1="70" y1="261.5" x2="92" y2="261.5" stroke="#9a9a9a" stroke-width="1.1"/>
<ellipse cx="82.19999999999999" cy="245.2" rx="7.4" ry="5.6" fill="#10b840" opacity="0.85"/>
<ellipse cx="82.19999999999999" cy="255.3" rx="7.4" ry="5.6" fill="#10b840" opacity="0.85"/>
<ellipse cx="82.19999999999999" cy="265.4" rx="7.4" ry="5.6" fill="#10b840" opacity="0.85"/>
<ellipse cx="82.19999999999999" cy="275.5" rx="7.4" ry="5.6" fill="#10b840" opacity="0.85"/>
<ellipse cx="82.19999999999999" cy="285.4" rx="7.4" ry="5.6" fill="#10b840" opacity="0.85"/>
<line x1="88.9" y1="234" x2="88.9" y2="284" stroke="#0fae3c" stroke-width="1.5"/>
<line x1="75.30000000000001" y1="242" x2="75.30000000000001" y2="300.5" stroke="#12e046" stroke-width="1.5"/>
</svg>
<span style="left:29.0px;top:100.80000000000001px;font-size:16px;line-height:16px;color:#444;font-weight:bold;">15</span>
<span style="left:26.0px;top:380.5px;font-size:14.5px;line-height:14.5px;color:#353535;font-weight:bold;">15</span>
<span style="left:153.0px;top:100.80000000000001px;font-size:16px;line-height:16px;color:#444;font-weight:bold;">15</span>
<span style="left:150.0px;top:380.5px;font-size:14.5px;line-height:14.5px;color:#353535;font-weight:bold;">15</span>
<span style="left:166px;top:396px;width:80px;text-align:center;font-size:37px;line-height:37px;color:#0cbf40;">C</span>
<span style="left:166px;top:438px;width:80px;text-align:center;font-size:13px;line-height:13px;color:#0cbf40;">Root</span>
<span style="left:244px;top:396px;width:80px;text-align:center;font-size:37px;line-height:37px;color:#fff;">D</span>
<span style="left:244px;top:438px;width:80px;text-align:center;font-size:13px;line-height:13px;color:#fff;">2nd</span>
<span style="left:323.5px;top:396px;width:80px;text-align:center;font-size:37px;line-height:37px;color:#0cbf40;">E</span>
<span style="left:323.5px;top:438px;width:80px;text-align:center;font-size:13px;line-height:13px;color:#0cbf40;">Maj_3rd</span>
<span style="left:402.5px;top:396px;width:80px;text-align:center;font-size:37px;line-height:37px;color:#0cbf40;">F</span>
<span style="left:402.5px;top:438px;width:80px;text-align:center;font-size:13px;line-height:13px;color:#0cbf40;">4th</span>
<span style="left:481.5px;top:396px;width:80px;text-align:center;font-size:37px;line-height:37px;color:#fff;">G</span>
<span style="left:481.5px;top:438px;width:80px;text-align:center;font-size:13px;line-height:13px;color:#fff;">5th</span>
<span style="left:559.5px;top:396px;width:80px;text-align:center;font-size:37px;line-height:37px;color:#0cbf40;">A</span>
<span style="left:559.5px;top:438px;width:80px;text-align:center;font-size:13px;line-height:13px;color:#0cbf40;">Maj_6th</span>
<span style="left:638.5px;top:396px;width:80px;text-align:center;font-size:37px;line-height:37px;color:#fff;">B</span>
<span style="left:638.5px;top:438px;width:80px;text-align:center;font-size:13px;line-height:13px;color:#fff;">Maj_7th</span>
<span style="left:717.5px;top:396px;width:80px;text-align:center;font-size:37px;line-height:37px;color:#0cbf40;">C</span>
<span style="left:717.5px;top:438px;width:80px;text-align:center;font-size:13px;line-height:13px;color:#0cbf40;">8ve</span>
<span style="left:33.5px;top:396px;width:80px;text-align:center;font-size:32px;line-height:37px;color:#5a5a5a;">F3</span>
<div class="clr" style="left:32.5px;top:435.5px;width:29.5px;height:29.5px;line-height:27.5px;font-size:7.5px;">Clear</div>
<div class="flats" style="left:79px;top:440px;width:36px;height:20px;line-height:20.5px;">Flats</div>
<div class="sg" style="left:7px;top:474px;width:82px;height:20.3px;line-height:18.5px;">Scale_Guide</div>
<svg width="1" height="1" style="left:100.4px;top:484.5px"><circle r="6.7" fill="none" stroke="#fff" stroke-width="1.1"/><path d="M3.6,0 L-3.4,0 M-0.3,-3 L-3.4,0 L-0.3,3" fill="none" stroke="#fff" stroke-width="1.8"/></svg>
<svg width="1" height="1" style="left:118.69999999999999px;top:484.5px"><circle r="6.7" fill="none" stroke="#fff" stroke-width="1.1"/><path d="M-3.6,0 L3.4,0 M0.3,-3 L3.4,0 L0.3,3" fill="none" stroke="#fff" stroke-width="1.8"/></svg>
<span style="left:153px;top:481px;font-size:12px;line-height:12px;color:#a8a8a8;">Pop Up Piano&nbsp; uses standard MIDI note values and octave numbering. Standard MIDI uses C3 as middile C (262Hz), classical music theroy often calls the same note C4.</span>
</div>
<div class="win" style="left:90px;top:41.5px;width:150.5px;height:257px;">
<div class="tb" style="height:18.5px;background:#f6f6f6;"></div>
<div class="tl" style="left:4.5px;top:4.25px;background:#fe5f57;border-color:#e2463f"></div>
<div class="tl" style="left:19.5px;top:4.25px;background:#febc2e;border-color:#e1a116"></div>
<div class="tl" style="left:34.5px;top:4.25px;background:#28c840;border-color:#1aab29"></div>
<span style="left:50.5px;top:0.0px;font-size:12px;line-height:12px;color:#4a4a4a;line-height:18.5px;height:18.5px;">[popup_pitchmod]</span>
<span style="left:8px;top:23.0px;font-size:12px;line-height:12px;color:#fff;">Pitch Bend</span>
<span style="left:81px;top:23.0px;font-size:12px;line-height:12px;color:#fff;">Modulation</span>
<div style="left:13px;top:41.5px;width:52px;height:207.5px;background:#232623;"></div>
<div style="left:13px;top:46.2px;width:52px;height:198.3px;background:#40453f;"></div>
<div style="left:13px;top:141.5px;width:52px;height:103px;background:#007f33;"></div>
<div style="left:87px;top:41.5px;width:52px;height:207.5px;background:#232623;"></div>
<div style="left:87px;top:46.2px;width:52px;height:198.3px;background:#40453f;"></div>
<div style="left:87px;top:238.5px;width:52px;height:6px;background:#27793f;"></div>
<div style="left:13px;top:147.8px;width:52px;height:0.8px;background:#4f6f58;"></div>
</div>
<div class="win" style="left:97px;top:734.8px;width:1279.5px;height:306px;">
<div class="tb" style="height:18.8px;background:#e8e8e8;"></div>
<div class="tl" style="left:4.5px;top:4.4px;background:#d2d2d2;border-color:#bdbdbd"></div>
<div class="tl" style="left:19.5px;top:4.4px;background:#d2d2d2;border-color:#bdbdbd"></div>
<div class="tl" style="left:34.5px;top:4.4px;background:#d2d2d2;border-color:#bdbdbd"></div>
<span style="left:601px;top:0.0px;font-size:12px;line-height:12px;color:#a9a9a9;line-height:18.8px;height:18.8px;">[popup_guitar]</span>
<div class="clr" style="left:7.5px;top:29.700000000000045px;width:55px;height:55px;line-height:53px;font-size:11px;">Clear</div>
<span style="left:261.7px;top:25.90000000000009px;font-size:48.6px;line-height:48.6px;color:#fff;">C Major</span>
<span style="left:626.2px;top:43.200000000000045px;font-size:20.3px;line-height:20.3px;color:#fff;-webkit-text-stroke:0.3px #fff;">C D E F G A B C</span>
<span style="left:943px;top:35.200000000000045px;font-size:30px;line-height:30px;color:#9a9a9a;">last played note:</span>
<span style="left:56px;top:87.20000000000005px;width:30px;text-align:center;font-size:12px;line-height:12px;color:#fff;font-weight:bold;">0</span>
<span style="left:188px;top:87.20000000000005px;width:30px;text-align:center;font-size:12px;line-height:12px;color:#fff;font-weight:bold;">1</span>
<span style="left:312px;top:87.20000000000005px;width:30px;text-align:center;font-size:12px;line-height:12px;color:#fff;font-weight:bold;">2</span>
<span style="left:436px;top:87.20000000000005px;width:30px;text-align:center;font-size:12px;line-height:12px;color:#fff;font-weight:bold;">3</span>
<span style="left:553px;top:87.20000000000005px;width:30px;text-align:center;font-size:12px;line-height:12px;color:#fff;font-weight:bold;">4</span>
<span style="left:662px;top:87.20000000000005px;width:30px;text-align:center;font-size:12px;line-height:12px;color:#fff;font-weight:bold;">5</span>
<span style="left:765px;top:87.20000000000005px;width:30px;text-align:center;font-size:12px;line-height:12px;color:#fff;font-weight:bold;">6</span>
<span style="left:864px;top:87.20000000000005px;width:30px;text-align:center;font-size:12px;line-height:12px;color:#fff;font-weight:bold;">7</span>
<span style="left:950px;top:87.20000000000005px;width:30px;text-align:center;font-size:12px;line-height:12px;color:#fff;font-weight:bold;">8</span>
<span style="left:1029px;top:87.20000000000005px;width:30px;text-align:center;font-size:12px;line-height:12px;color:#fff;font-weight:bold;">9</span>
<span style="left:1103.5px;top:87.20000000000005px;width:30px;text-align:center;font-size:12px;line-height:12px;color:#fff;font-weight:bold;">10</span>
<span style="left:1169px;top:87.20000000000005px;width:30px;text-align:center;font-size:12px;line-height:12px;color:#fff;font-weight:bold;">11</span>
<span style="left:1227.5px;top:87.20000000000005px;width:30px;text-align:center;font-size:12px;line-height:12px;color:#fff;font-weight:bold;">12</span>
<div style="left:3px;top:104.30000000000007px;width:50px;height:21.9px;background:#2c2c2c;"></div>
<svg width="8" height="12" style="left:7px;top:109.30000000000007px"><path d="M0.3,0.3 L6.3,6 L0.3,11.7 Z" fill="#6e6e6e"/></svg>
<span style="left:15px;top:108.50000000000011px;font-size:13.3px;line-height:13.3px;color:#fff;-webkit-text-stroke:0.15px #fff;">E3</span>
<div style="left:59.099999999999994px;top:106.40000000000009px;width:23.8px;height:16.6px;background:#19ff50;border:1px solid #12c83e;"></div>
<div style="left:87.1px;top:106.40000000000009px;width:127.7px;height:16.6px;background:#19ff50;border:1px solid #12c83e;"></div>
<div style="left:219.5px;top:106.40000000000009px;width:120.8px;height:16.6px;background:#9b9b9b;border:1px solid #7d7d7d;"></div>
<div style="left:345.6px;top:106.40000000000009px;width:116.9px;height:16.6px;background:#6a8c69;border:1px solid #54725a;"></div>
<div style="left:467.6px;top:106.40000000000009px;width:111.8px;height:16.6px;background:#9b9b9b;border:1px solid #7d7d7d;"></div>
<div style="left:584.7px;top:106.40000000000009px;width:105.8px;height:16.6px;background:#6a8c69;border:1px solid #54725a;"></div>
<div style="left:695.5px;top:106.40000000000009px;width:99.1px;height:16.6px;background:#9b9b9b;border:1px solid #7d7d7d;"></div>
<div style="left:799.6px;top:106.40000000000009px;width:90.9px;height:16.6px;background:#6a8c69;border:1px solid #54725a;"></div>
<div style="left:895.8px;top:106.40000000000009px;width:80.6px;height:16.6px;background:#97843f;border:1px solid #7d6c30;"></div>
<div style="left:981.7px;top:106.40000000000009px;width:74.8px;height:16.6px;background:#9b9b9b;border:1px solid #7d7d7d;"></div>
<div style="left:1061.5px;top:106.40000000000009px;width:70.2px;height:16.6px;background:#6a8c69;border:1px solid #54725a;"></div>
<div style="left:1136.4px;top:106.40000000000009px;width:62.1px;height:16.6px;background:#9b9b9b;border:1px solid #7d7d7d;"></div>
<div style="left:1203.5px;top:106.40000000000009px;width:54.1px;height:16.6px;background:#6a8c69;border:1px solid #54725a;"></div>
<div style="left:3px;top:127.30000000000007px;width:50px;height:21.9px;background:#2c2c2c;"></div>
<svg width="8" height="12" style="left:7px;top:132.30000000000007px"><path d="M0.3,0.3 L6.3,6 L0.3,11.7 Z" fill="#6e6e6e"/></svg>
<span style="left:15px;top:131.5000000000001px;font-size:13.3px;line-height:13.3px;color:#fff;-webkit-text-stroke:0.15px #fff;">B2</span>
<div style="left:59.099999999999994px;top:129.4000000000001px;width:23.8px;height:16.6px;background:#6a8c69;border:1px solid #54725a;"></div>
<div style="left:87.1px;top:129.4000000000001px;width:127.7px;height:16.6px;background:#19ff50;border:1px solid #12c83e;"></div>
<div style="left:219.5px;top:129.4000000000001px;width:120.8px;height:16.6px;background:#9b9b9b;border:1px solid #7d7d7d;"></div>
<div style="left:345.6px;top:129.4000000000001px;width:116.9px;height:16.6px;background:#6a8c69;border:1px solid #54725a;"></div>
<div style="left:467.6px;top:129.4000000000001px;width:111.8px;height:16.6px;background:#9b9b9b;border:1px solid #7d7d7d;"></div>
<div style="left:584.7px;top:129.4000000000001px;width:105.8px;height:16.6px;background:#19ff50;border:1px solid #12c83e;"></div>
<div style="left:695.5px;top:129.4000000000001px;width:99.1px;height:16.6px;background:#19ff50;border:1px solid #12c83e;"></div>
<div style="left:799.6px;top:129.4000000000001px;width:90.9px;height:16.6px;background:#9b9b9b;border:1px solid #7d7d7d;"></div>
<div style="left:895.8px;top:129.4000000000001px;width:80.6px;height:16.6px;background:#6a8c69;border:1px solid #54725a;"></div>
<div style="left:981.7px;top:129.4000000000001px;width:74.8px;height:16.6px;background:#9b9b9b;border:1px solid #7d7d7d;"></div>
<div style="left:1061.5px;top:129.4000000000001px;width:70.2px;height:16.6px;background:#6a8c69;border:1px solid #54725a;"></div>
<div style="left:1136.4px;top:129.4000000000001px;width:62.1px;height:16.6px;background:#9b9b9b;border:1px solid #7d7d7d;"></div>
<div style="left:1203.5px;top:129.4000000000001px;width:54.1px;height:16.6px;background:#6a8c69;border:1px solid #54725a;"></div>
<div style="left:3px;top:150.30000000000007px;width:50px;height:21.9px;background:#2c2c2c;"></div>
<svg width="8" height="12" style="left:7px;top:155.30000000000007px"><path d="M0.3,0.3 L6.3,6 L0.3,11.7 Z" fill="#6e6e6e"/></svg>
<span style="left:15px;top:154.5000000000001px;font-size:13.3px;line-height:13.3px;color:#fff;-webkit-text-stroke:0.15px #fff;">G2</span>
<div style="left:59.099999999999994px;top:152.4000000000001px;width:23.8px;height:16.6px;background:#6a8c69;border:1px solid #54725a;"></div>
<div style="left:87.1px;top:152.4000000000001px;width:127.7px;height:16.6px;background:#9b9b9b;border:1px solid #7d7d7d;"></div>
<div style="left:219.5px;top:152.4000000000001px;width:120.8px;height:16.6px;background:#19ff50;border:1px solid #12c83e;"></div>
<div style="left:345.6px;top:152.4000000000001px;width:116.9px;height:16.6px;background:#9b9b9b;border:1px solid #7d7d7d;"></div>
<div style="left:467.6px;top:152.4000000000001px;width:111.8px;height:16.6px;background:#6a8c69;border:1px solid #54725a;"></div>
<div style="left:584.7px;top:152.4000000000001px;width:105.8px;height:16.6px;background:#19ff50;border:1px solid #12c83e;"></div>
<div style="left:695.5px;top:152.4000000000001px;width:99.1px;height:16.6px;background:#9b9b9b;border:1px solid #7d7d7d;"></div>
<div style="left:799.6px;top:152.4000000000001px;width:90.9px;height:16.6px;background:#6a8c69;border:1px solid #54725a;"></div>
<div style="left:895.8px;top:152.4000000000001px;width:80.6px;height:16.6px;background:#9b9b9b;border:1px solid #7d7d7d;"></div>
<div style="left:981.7px;top:152.4000000000001px;width:74.8px;height:16.6px;background:#19ff50;border:1px solid #12c83e;"></div>
<div style="left:1061.5px;top:152.4000000000001px;width:70.2px;height:16.6px;background:#19ff50;border:1px solid #12c83e;"></div>
<div style="left:1136.4px;top:152.4000000000001px;width:62.1px;height:16.6px;background:#9b9b9b;border:1px solid #7d7d7d;"></div>
<div style="left:1203.5px;top:152.4000000000001px;width:54.1px;height:16.6px;background:#6a8c69;border:1px solid #54725a;"></div>
<div style="left:3px;top:173.30000000000007px;width:50px;height:21.9px;background:#2c2c2c;"></div>
<svg width="8" height="12" style="left:7px;top:178.30000000000007px"><path d="M0.3,0.3 L6.3,6 L0.3,11.7 Z" fill="#6e6e6e"/></svg>
<span style="left:15px;top:177.5000000000001px;font-size:13.3px;line-height:13.3px;color:#fff;-webkit-text-stroke:0.15px #fff;">D2</span>
<div style="left:59.099999999999994px;top:175.4000000000001px;width:23.8px;height:16.6px;background:#6a8c69;border:1px solid #54725a;"></div>
<div style="left:87.1px;top:175.4000000000001px;width:127.7px;height:16.6px;background:#9b9b9b;border:1px solid #7d7d7d;"></div>
<div style="left:219.5px;top:175.4000000000001px;width:120.8px;height:16.6px;background:#6a8c69;border:1px solid #54725a;"></div>
<div style="left:345.6px;top:175.4000000000001px;width:116.9px;height:16.6px;background:#19ff50;border:1px solid #12c83e;"></div>
<div style="left:467.6px;top:175.4000000000001px;width:111.8px;height:16.6px;background:#9b9b9b;border:1px solid #7d7d7d;"></div>
<div style="left:584.7px;top:175.4000000000001px;width:105.8px;height:16.6px;background:#6a8c69;border:1px solid #54725a;"></div>
<div style="left:695.5px;top:175.4000000000001px;width:99.1px;height:16.6px;background:#9b9b9b;border:1px solid #7d7d7d;"></div>
<div style="left:799.6px;top:175.4000000000001px;width:90.9px;height:16.6px;background:#19ff50;border:1px solid #12c83e;"></div>
<div style="left:895.8px;top:175.4000000000001px;width:80.6px;height:16.6px;background:#9b9b9b;border:1px solid #7d7d7d;"></div>
<div style="left:981.7px;top:175.4000000000001px;width:74.8px;height:16.6px;background:#6a8c69;border:1px solid #54725a;"></div>
<div style="left:1061.5px;top:175.4000000000001px;width:70.2px;height:16.6px;background:#19ff50;border:1px solid #12c83e;"></div>
<div style="left:1136.4px;top:175.4000000000001px;width:62.1px;height:16.6px;background:#9b9b9b;border:1px solid #7d7d7d;"></div>
<div style="left:1203.5px;top:175.4000000000001px;width:54.1px;height:16.6px;background:#6a8c69;border:1px solid #54725a;"></div>
<div style="left:3px;top:196.30000000000007px;width:50px;height:21.9px;background:#2c2c2c;"></div>
<svg width="8" height="12" style="left:7px;top:201.30000000000007px"><path d="M0.3,0.3 L6.3,6 L0.3,11.7 Z" fill="#6e6e6e"/></svg>
<span style="left:15px;top:200.5000000000001px;font-size:13.3px;line-height:13.3px;color:#fff;-webkit-text-stroke:0.15px #fff;">A1</span>
<div style="left:59.099999999999994px;top:198.4000000000001px;width:23.8px;height:16.6px;background:#6a8c69;border:1px solid #54725a;"></div>
<div style="left:87.1px;top:198.4000000000001px;width:127.7px;height:16.6px;background:#9b9b9b;border:1px solid #7d7d7d;"></div>
<div style="left:219.5px;top:198.4000000000001px;width:120.8px;height:16.6px;background:#6a8c69;border:1px solid #54725a;"></div>
<div style="left:345.6px;top:198.4000000000001px;width:116.9px;height:16.6px;background:#97843f;border:1px solid #7d6c30;"></div>
<div style="left:467.6px;top:198.4000000000001px;width:111.8px;height:16.6px;background:#9b9b9b;border:1px solid #7d7d7d;"></div>
<div style="left:584.7px;top:198.4000000000001px;width:105.8px;height:16.6px;background:#6a8c69;border:1px solid #54725a;"></div>
<div style="left:695.5px;top:198.4000000000001px;width:99.1px;height:16.6px;background:#9b9b9b;border:1px solid #7d7d7d;"></div>
<div style="left:799.6px;top:198.4000000000001px;width:90.9px;height:16.6px;background:#6a8c69;border:1px solid #54725a;"></div>
<div style="left:895.8px;top:198.4000000000001px;width:80.6px;height:16.6px;background:#19ff50;border:1px solid #12c83e;"></div>
<div style="left:981.7px;top:198.4000000000001px;width:74.8px;height:16.6px;background:#9b9b9b;border:1px solid #7d7d7d;"></div>
<div style="left:1061.5px;top:198.4000000000001px;width:70.2px;height:16.6px;background:#6a8c69;border:1px solid #54725a;"></div>
<div style="left:1136.4px;top:198.4000000000001px;width:62.1px;height:16.6px;background:#9b9b9b;border:1px solid #7d7d7d;"></div>
<div style="left:1203.5px;top:198.4000000000001px;width:54.1px;height:16.6px;background:#19ff50;border:1px solid #12c83e;"></div>
<div style="left:3px;top:219.30000000000007px;width:50px;height:21.9px;background:#2c2c2c;"></div>
<svg width="8" height="12" style="left:7px;top:224.30000000000007px"><path d="M0.3,0.3 L6.3,6 L0.3,11.7 Z" fill="#6e6e6e"/></svg>
<span style="left:15px;top:223.5000000000001px;font-size:13.3px;line-height:13.3px;color:#fff;-webkit-text-stroke:0.15px #fff;">E1</span>
<div style="left:59.099999999999994px;top:221.4000000000001px;width:23.8px;height:16.6px;background:#6a8c69;border:1px solid #54725a;"></div>
<div style="left:87.1px;top:221.4000000000001px;width:127.7px;height:16.6px;background:#6a8c69;border:1px solid #54725a;"></div>
<div style="left:219.5px;top:221.4000000000001px;width:120.8px;height:16.6px;background:#9b9b9b;border:1px solid #7d7d7d;"></div>
<div style="left:345.6px;top:221.4000000000001px;width:116.9px;height:16.6px;background:#6a8c69;border:1px solid #54725a;"></div>
<div style="left:467.6px;top:221.4000000000001px;width:111.8px;height:16.6px;background:#9b9b9b;border:1px solid #7d7d7d;"></div>
<div style="left:584.7px;top:221.4000000000001px;width:105.8px;height:16.6px;background:#6a8c69;border:1px solid #54725a;"></div>
<div style="left:695.5px;top:221.4000000000001px;width:99.1px;height:16.6px;background:#9b9b9b;border:1px solid #7d7d7d;"></div>
<div style="left:799.6px;top:221.4000000000001px;width:90.9px;height:16.6px;background:#6a8c69;border:1px solid #54725a;"></div>
<div style="left:895.8px;top:221.4000000000001px;width:80.6px;height:16.6px;background:#97843f;border:1px solid #7d6c30;"></div>
<div style="left:981.7px;top:221.4000000000001px;width:74.8px;height:16.6px;background:#9b9b9b;border:1px solid #7d7d7d;"></div>
<div style="left:1061.5px;top:221.4000000000001px;width:70.2px;height:16.6px;background:#6a8c69;border:1px solid #54725a;"></div>
<div style="left:1136.4px;top:221.4000000000001px;width:62.1px;height:16.6px;background:#9b9b9b;border:1px solid #7d7d7d;"></div>
<div style="left:1203.5px;top:221.4000000000001px;width:54.1px;height:16.6px;background:#6a8c69;border:1px solid #54725a;"></div>
<span style="left:396px;top:245.20000000000005px;width:10px;text-align:center;font-size:11px;line-height:11px;color:#fff;font-weight:bold;">*</span>
<span style="left:630px;top:245.20000000000005px;width:10px;text-align:center;font-size:11px;line-height:11px;color:#fff;font-weight:bold;">*</span>
<span style="left:837px;top:245.20000000000005px;width:10px;text-align:center;font-size:11px;line-height:11px;color:#fff;font-weight:bold;">*</span>
<span style="left:1011px;top:245.20000000000005px;width:10px;text-align:center;font-size:11px;line-height:11px;color:#fff;font-weight:bold;">*</span>
<span style="left:1214px;top:245.20000000000005px;width:10px;text-align:center;font-size:11px;line-height:11px;color:#fff;font-weight:bold;">*</span>
<span style="left:1233px;top:245.20000000000005px;width:10px;text-align:center;font-size:11px;line-height:11px;color:#fff;font-weight:bold;">*</span>
<span style="left:7px;top:252.70000000000005px;font-size:12px;line-height:12px;color:#fff;">Tuning</span>
<span class="ab" style="left:72px;top:253.70000000000005px;font-size:9.6px;line-height:9.6px;color:#fff;-webkit-text-stroke:0.35px #fff;letter-spacing:0.55px;">Stadard (E A D G B E)</span>
<div class="arr" style="left:244px;top:254.70000000000005px;width:0px;height:0px;border-left-width:3.7px;border-right-width:3.7px;border-top-width:4.5px;"></div>
<span style="left:7px;top:276.9000000000001px;font-size:12px;line-height:12px;color:#fff;">Set Scale:</span>
<span style="left:70px;top:276.9000000000001px;font-size:12px;line-height:12px;color:#fff;">C</span>
<div class="arr" style="left:89px;top:280.20000000000005px;width:0px;height:0px;"></div>
<span style="left:117px;top:276.9000000000001px;font-size:12px;line-height:12px;color:#fff;">Major</span>
<div class="arr" style="left:241px;top:280.20000000000005px;width:0px;height:0px;"></div>
<span style="left:275px;top:276.4000000000001px;font-size:12px;line-height:12px;color:#a8a8a8;">Pop Up Piano&nbsp; uses standard MIDI note values and octave numbering. Standard MIDI uses C3 as middile C (262Hz), classical music theroy often calls the same note C4.</span>
</div>
<div class="win" style="left:1294px;top:245px;width:440px;height:567.5px;">
<div class="tb" style="height:18.5px;background:#e8e8e8;"></div>
<div class="tl" style="left:4.5px;top:4.25px;background:#d2d2d2;border-color:#bdbdbd"></div>
<div class="tl" style="left:19.5px;top:4.25px;background:#d2d2d2;border-color:#bdbdbd"></div>
<div class="tl" style="left:34.5px;top:4.25px;background:#d2d2d2;border-color:#bdbdbd"></div>
<div style="left:0;right:0;top:0;height:18.5px;line-height:18.5px;text-align:center;font-size:12px;color:#a9a9a9;">[popup_wheel]</div>
<svg width="440" height="567" style="left:0;top:0">
<circle cx="207.70000000000005" cy="220.3" r="190" fill="#564f4f"/>
<polyline points="302.7,384.8 112.7,384.8 17.7,220.3 43.2,125.3 207.7,30.3 372.2,125.3 372.2,315.3 302.7,384.8" fill="none" stroke="#f4ef34" stroke-width="2.6" stroke-linejoin="round"/>
<polyline points="207.7,30.3 372.2,125.3 372.2,315.3 302.7,384.8 112.7,384.8 17.7,220.3 112.7,55.8 207.7,30.3" fill="none" stroke="#d41414" stroke-width="1.9" stroke-linejoin="round"/>
<polyline points="302.7,384.8 17.7,220.3 207.7,30.3 372.2,315.3 302.7,384.8" fill="none" stroke="#0ccf45" stroke-width="1.8" stroke-linejoin="round"/>
<circle cx="302.7" cy="55.8" r="3.2" fill="#fff" stroke="#8a1010" stroke-width="1.2"/>
<circle cx="397.7" cy="220.3" r="3.2" fill="#fff" stroke="#8a1010" stroke-width="1.2"/>
<circle cx="207.7" cy="410.3" r="3.2" fill="#fff" stroke="#8a1010" stroke-width="1.2"/>
<circle cx="43.2" cy="315.3" r="3.2" fill="#fff" stroke="#8a1010" stroke-width="1.2"/>
<circle cx="372.2" cy="125.3" r="4" fill="#f31212"/>
<circle cx="112.7" cy="384.8" r="4" fill="#f31212"/>
<circle cx="112.7" cy="55.8" r="4" fill="#f31212"/>
<circle cx="43.2" cy="125.3" r="3.3" fill="#ffa030" stroke="#e02a10" stroke-width="1.2"/>
<circle cx="302.7" cy="384.8" r="6" fill="none" stroke="#b89a30" stroke-width="2"/>
<circle cx="207.7" cy="30.3" r="3.6" fill="#18c040" stroke="#0a8a2a" stroke-width="1"/>
<circle cx="372.2" cy="315.3" r="3.6" fill="#18c040" stroke="#0a8a2a" stroke-width="1"/>
<circle cx="302.7" cy="384.8" r="3.6" fill="#18c040" stroke="#0a8a2a" stroke-width="1"/>
<circle cx="17.7" cy="220.3" r="3.6" fill="#18c040" stroke="#0a8a2a" stroke-width="1"/>
</svg>
<span style="left:177.5px;top:36.0px;width:60px;text-align:center;font-size:23px;line-height:23px;color:#fff;font-weight:bold;">C</span>
<span style="left:90.5px;top:60.0px;width:60px;text-align:center;font-size:22px;line-height:22px;color:#c9c3c3;-webkit-text-stroke:0.3px #c9c3c3;">B</span>
<span style="left:327px;top:123.5px;width:60px;text-align:center;font-size:22px;line-height:22px;color:#c9c3c3;-webkit-text-stroke:0.3px #c9c3c3;">D</span>
<span style="left:5.5px;top:210.0px;width:60px;text-align:center;font-size:22px;line-height:22px;color:#c9c3c3;-webkit-text-stroke:0.3px #c9c3c3;">A</span>
<span style="left:327px;top:296.5px;width:60px;text-align:center;font-size:22px;line-height:22px;color:#c9c3c3;-webkit-text-stroke:0.3px #c9c3c3;">E</span>
<span style="left:92px;top:358.5px;width:60px;text-align:center;font-size:22px;line-height:22px;color:#c9c3c3;-webkit-text-stroke:0.3px #c9c3c3;">G</span>
<span style="left:265px;top:358.5px;width:60px;text-align:center;font-size:22px;line-height:22px;color:#c9c3c3;-webkit-text-stroke:0.3px #c9c3c3;">F</span>
<span style="left:107.5px;top:203px;width:200px;text-align:center;font-size:36px;line-height:36px;color:#f6eeee;-webkit-text-stroke:0.4px #f6eeee;">F Maj7</span>
<div style="left:11.5px;top:425px;width:99px;height:16px;background:#fba32f;color:#000;font-size:8.7px;line-height:16px;text-align:center;font-family:"DejaVu Sans",sans-serif;letter-spacing:0.1px;">Chord_Names_ON</div>
<span style="left:14.700000000000045px;top:450px;font-size:20px;line-height:20px;color:#fff;-webkit-text-stroke:0.3px #fff;">Set Scale:</span>
<span style="left:121.70000000000005px;top:450px;font-size:20px;line-height:20px;color:#fff;-webkit-text-stroke:0.3px #fff;">C</span>
<div class="arr" style="left:179.5px;top:458.5px;width:0px;height:0px;border-left-width:5.5px;border-right-width:5.5px;border-top-width:6px;"></div>
<span style="left:220.70000000000005px;top:450.5px;font-size:20px;line-height:20px;color:#fff;-webkit-text-stroke:0.3px #fff;">Major</span>
<div class="arr" style="left:379px;top:458.5px;width:0px;height:0px;border-left-width:5.5px;border-right-width:5.5px;border-top-width:6px;"></div>
<span style="left:14.700000000000045px;top:493px;font-size:20px;line-height:20px;color:#fff;-webkit-text-stroke:0.3px #fff;">Set Scale 2:F</span>
<div class="arr" style="left:179.5px;top:501.5px;width:0px;height:0px;border-left-width:5.5px;border-right-width:5.5px;border-top-width:6px;"></div>
<span style="left:220.70000000000005px;top:493.5px;font-size:20px;line-height:20px;color:#fff;-webkit-text-stroke:0.3px #fff;">Major</span>
<div class="arr" style="left:379px;top:501.5px;width:0px;height:0px;border-left-width:5.5px;border-right-width:5.5px;border-top-width:6px;"></div>
<div style="left:11.5px;top:537.5px;width:187px;height:20px;background:#fba32f;color:#000;font-size:20px;line-height:19px;text-align:center;">Compare_Scale</div>
<div style="left:217.5px;top:537.5px;width:189px;height:20px;background:#a9a9a9;color:#000;font-size:20px;line-height:19px;text-align:center;">'C'=12_O'Clock</div>
</div>
</body></html>
